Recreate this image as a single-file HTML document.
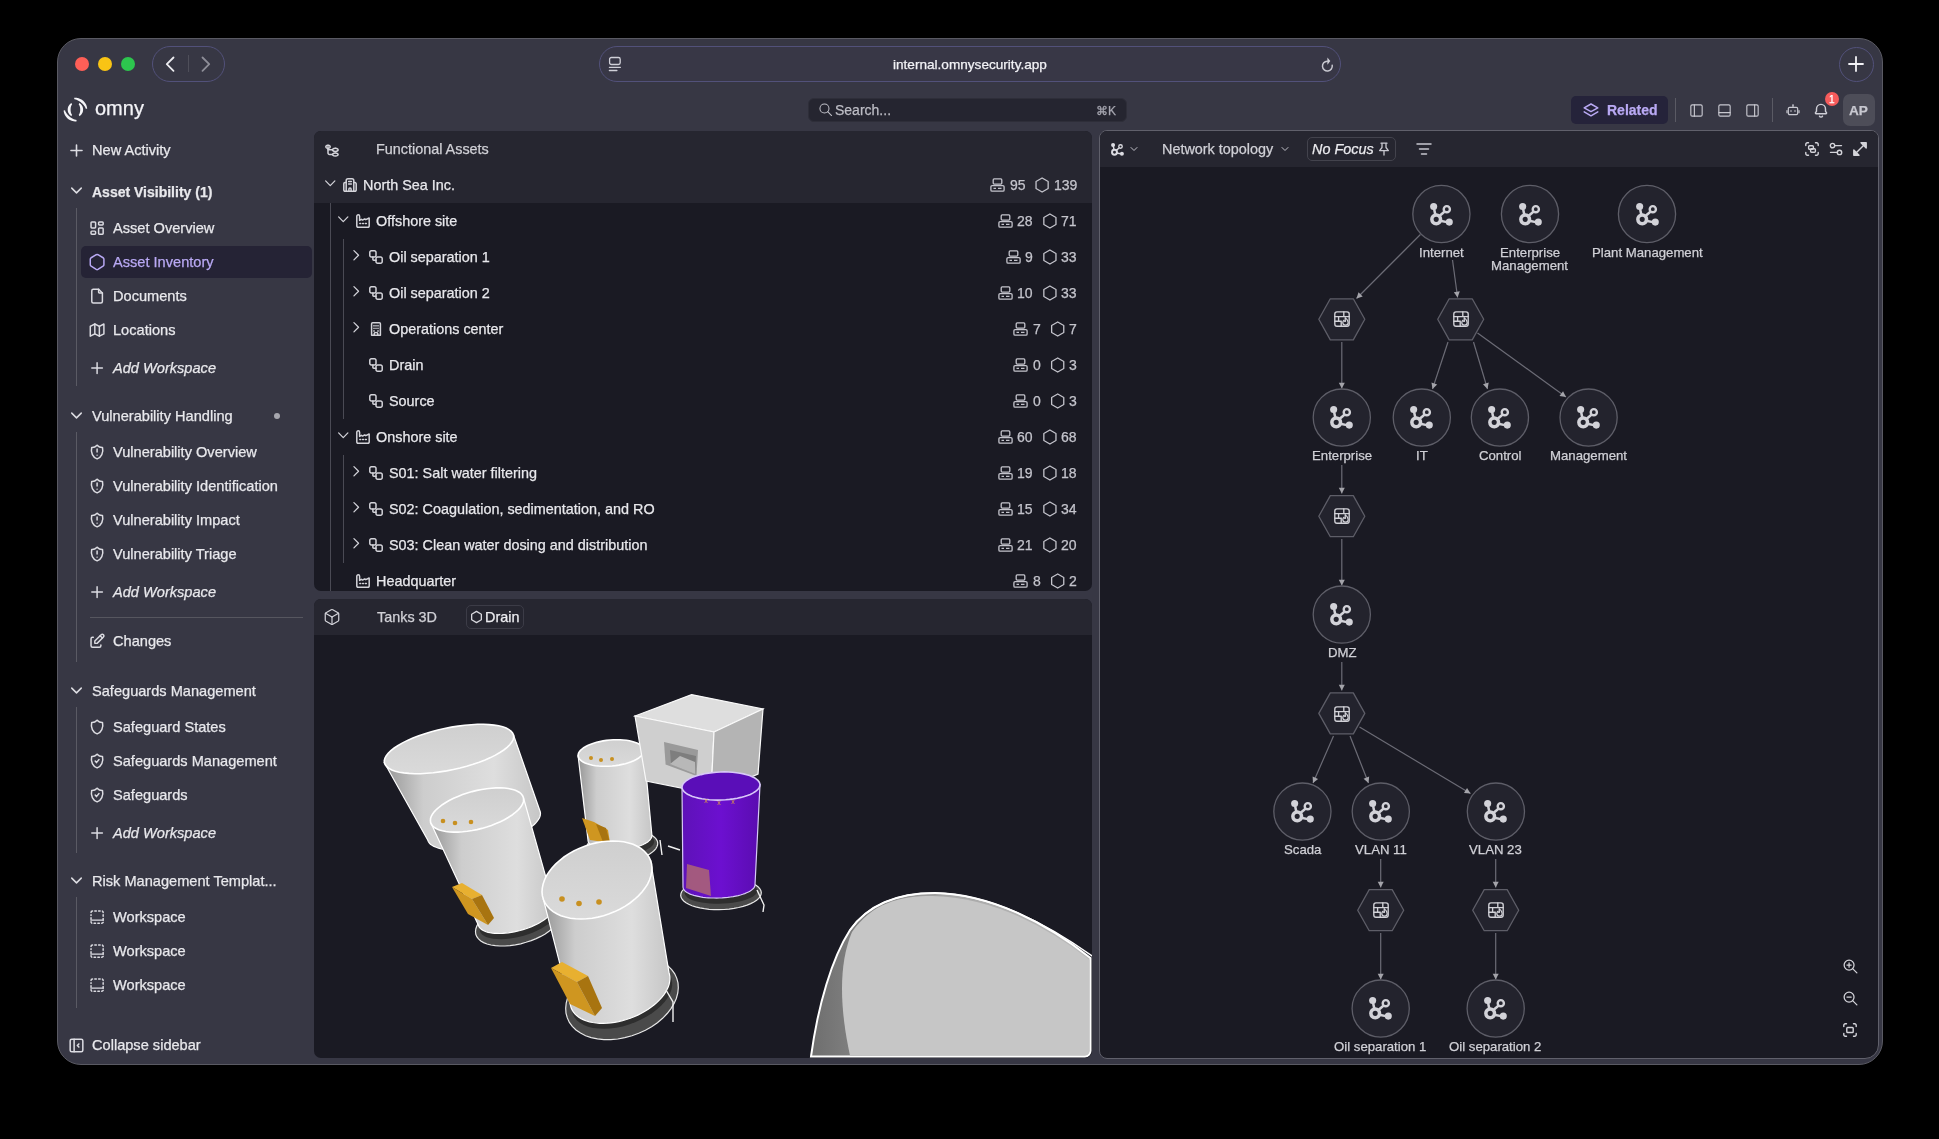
<!DOCTYPE html>
<html><head><meta charset="utf-8">
<style>
*{box-sizing:border-box;margin:0;padding:0}
html,body{width:1939px;height:1139px;background:#000;overflow:hidden;font-family:"Liberation Sans",sans-serif;color:#e6e6ea}
.abs{position:absolute}
.t{position:absolute;white-space:nowrap;line-height:1;will-change:transform;-webkit-text-stroke:0.25px currentColor}
svg{position:absolute;overflow:visible}
</style></head><body>
<div class="abs" style="left:57px;top:38px;width:1826px;height:1027px;background:#373744;border-radius:24px;border:1px solid #5a5a63"></div><div class="abs" style="left:75px;top:57px;width:14px;height:14px;border-radius:50%;background:#fe5f57"></div><div class="abs" style="left:98px;top:57px;width:14px;height:14px;border-radius:50%;background:#f9c414"></div><div class="abs" style="left:121px;top:57px;width:14px;height:14px;border-radius:50%;background:#2dc54e"></div><div class="abs" style="left:152px;top:46px;width:73px;height:36px;border-radius:18px;border:1px solid #52517a"></div><div class="abs" style="left:188px;top:55px;width:1px;height:17px;background:#4f4f5a"></div><svg style="left:0px;top:0px" width="1" height="1" viewBox="None" fill="none" stroke="#d8d8de" stroke-width="2" stroke-linecap="round" stroke-linejoin="round" ><path d="M173.5 57.5 L166.8 64.2 L173.5 70.8" stroke="#ececf0" stroke-width="1.8"/><path d="M202.5 57.5 L209.2 64.2 L202.5 70.8" stroke="#8e8e98" stroke-width="1.8"/></svg><div class="abs" style="left:599px;top:46px;width:742px;height:36px;border-radius:18px;border:1px solid #52517a;background:#383746"></div><div class="t" style="left:893px;top:57.71px;font-size:13.6px;color:#f2f2f6;font-weight:500;font-style:normal;">internal.omnysecurity.app</div><svg style="left:608px;top:56px" width="14" height="16" viewBox="0 0 14 16" fill="none" stroke="#d0d0d8" stroke-width="1.3" stroke-linecap="round"><rect x="1.6" y="1.5" width="10.6" height="7" rx="1.8"/><path d="M1.4 11.3h11M1.4 14.5h7.5"/></svg><svg style="left:1319px;top:55px" width="16" height="16" viewBox="0 0 16 16" fill="none" stroke="#c8c8d0" stroke-width="1.5" stroke-linecap="round"><path d="M13.2 10.25A4.9 4.9 0 1 1 8.2 6.2"/><path d="M8.4 2.4L11.3 6.1L8.4 9.8Z" fill="#d0d0d8" stroke="none"/></svg><div class="abs" style="left:1839px;top:47px;width:35px;height:35px;border-radius:50%;border:1px solid #52517a"></div><svg style="left:0px;top:0px" width="1" height="1" viewBox="" fill="none" stroke="#d8d8de" stroke-width="2" stroke-linecap="round" stroke-linejoin="round" ><path d="M1856 57V71M1849 64H1863" stroke="#f2f2f6" stroke-width="1.8"/></svg><svg style="left:0;top:0" width="1" height="1"><polygon points="71.32,116.13 70.89,115.84 70.48,115.52 70.09,115.18 69.73,114.81 69.39,114.41 69.08,113.99 68.80,113.56 68.54,113.10 68.32,112.63 68.13,112.15 67.98,111.65 67.86,111.15 67.77,110.64 67.72,110.12 67.70,109.60 67.72,109.08 67.77,108.56 67.86,108.05 67.98,107.55 68.13,107.05 68.32,106.57 68.54,106.10 68.80,105.64 69.08,105.21 69.39,104.79 69.73,104.39 70.09,104.02 70.48,103.68 70.89,103.36 71.32,103.07 72.11,104.34 71.85,104.69 71.62,105.06 71.42,105.42 71.25,105.79 71.11,106.16 70.98,106.53 70.89,106.89 70.81,107.25 70.74,107.60 70.69,107.95 70.66,108.29 70.63,108.62 70.61,108.95 70.60,109.28 70.60,109.60 70.60,109.92 70.61,110.25 70.63,110.58 70.66,110.91 70.69,111.25 70.74,111.60 70.81,111.95 70.89,112.31 70.98,112.67 71.11,113.04 71.25,113.41 71.42,113.78 71.62,114.14 71.85,114.51 72.11,114.86" fill="#f4f4f8"/><polygon points="79.48,103.07 79.91,103.36 80.32,103.68 80.71,104.02 81.07,104.39 81.41,104.79 81.72,105.21 82.00,105.64 82.26,106.10 82.48,106.57 82.67,107.05 82.82,107.55 82.94,108.05 83.03,108.56 83.08,109.08 83.10,109.60 83.08,110.12 83.03,110.64 82.94,111.15 82.82,111.65 82.67,112.15 82.48,112.63 82.26,113.10 82.00,113.56 81.72,113.99 81.41,114.41 81.07,114.81 80.71,115.18 80.32,115.52 79.91,115.84 79.48,116.13 78.69,114.86 78.95,114.51 79.18,114.14 79.38,113.78 79.55,113.41 79.69,113.04 79.82,112.67 79.91,112.31 79.99,111.95 80.06,111.60 80.11,111.25 80.14,110.91 80.17,110.58 80.19,110.25 80.20,109.92 80.20,109.60 80.20,109.28 80.19,108.95 80.17,108.62 80.14,108.29 80.11,107.95 80.06,107.60 79.99,107.25 79.91,106.89 79.82,106.53 79.69,106.16 79.55,105.79 79.38,105.42 79.18,105.06 78.95,104.69 78.69,104.34" fill="#f4f4f8"/><polygon points="74.17,97.86 74.80,97.82 75.43,97.80 76.06,97.82 76.69,97.87 77.31,97.96 77.93,98.08 78.55,98.23 79.15,98.41 79.74,98.63 80.32,98.88 80.89,99.16 81.44,99.46 81.98,99.80 82.49,100.17 82.98,100.56 83.46,100.98 83.91,101.42 84.33,101.89 84.73,102.38 85.11,102.89 85.45,103.42 85.77,103.96 86.05,104.53 86.31,105.10 86.53,105.69 86.73,106.29 86.89,106.91 87.02,107.52 87.11,108.15 87.17,108.78 85.77,108.87 85.59,108.34 85.37,107.82 85.13,107.32 84.88,106.83 84.60,106.37 84.31,105.93 84.00,105.50 83.69,105.09 83.36,104.70 83.03,104.32 82.69,103.96 82.34,103.61 81.98,103.27 81.62,102.95 81.25,102.63 80.87,102.32 80.49,102.02 80.09,101.73 79.69,101.45 79.27,101.17 78.84,100.91 78.40,100.66 77.94,100.41 77.47,100.19 76.98,99.98 76.48,99.79 75.96,99.62 75.42,99.47 74.87,99.35 74.31,99.26" fill="#f4f4f8"/><polygon points="76.63,121.34 76.00,121.38 75.37,121.40 74.74,121.38 74.11,121.33 73.49,121.24 72.87,121.12 72.25,120.97 71.65,120.79 71.06,120.57 70.48,120.32 69.91,120.04 69.36,119.74 68.82,119.40 68.31,119.03 67.82,118.64 67.34,118.22 66.89,117.78 66.47,117.31 66.07,116.82 65.69,116.31 65.35,115.78 65.03,115.24 64.75,114.67 64.49,114.10 64.27,113.51 64.07,112.91 63.91,112.29 63.78,111.68 63.69,111.05 63.63,110.42 65.03,110.33 65.21,110.86 65.43,111.38 65.67,111.88 65.92,112.37 66.20,112.83 66.49,113.27 66.80,113.70 67.11,114.11 67.44,114.50 67.77,114.88 68.11,115.24 68.46,115.59 68.82,115.93 69.18,116.25 69.55,116.57 69.93,116.88 70.31,117.18 70.71,117.47 71.11,117.75 71.53,118.03 71.96,118.29 72.40,118.54 72.86,118.79 73.33,119.01 73.82,119.22 74.32,119.41 74.84,119.58 75.38,119.73 75.93,119.85 76.49,119.94" fill="#f4f4f8"/></svg><div class="t" style="left:95px;top:98.39px;font-size:20px;color:#f4f4f8;font-weight:400;font-style:normal;">omny</div><div class="abs" style="left:808px;top:98px;width:319px;height:24px;border-radius:6px;background:#252530;border:1px solid #2e2e39"></div><svg style="left:818.25px;top:102.25px" width="15.5" height="15.5" viewBox="0 0 24 24" fill="none" stroke="#c0c0c8" stroke-width="1.6" stroke-linecap="round" stroke-linejoin="round" ><path d="M10 10m-7 0a7 7 0 1 0 14 0a7 7 0 1 0 -14 0"/><path d="M21 21l-6 -6"/></svg><div class="t" style="left:834.5px;top:103.37px;font-size:14px;color:#bdbdc5;font-weight:400;font-style:normal;">Search...</div><div class="t" style="left:1096px;top:105.03px;font-size:12px;color:#a8a8b2;font-weight:400;font-style:normal;">&#8984;K</div><div class="abs" style="left:1571px;top:96px;width:97px;height:28px;border-radius:5px;background:#25233a"></div><svg style="left:1583px;top:103px" width="16" height="15" viewBox="0 0 16 15" fill="none" stroke="#b9a9f4" stroke-width="1.5" stroke-linecap="round" stroke-linejoin="round"><path d="M8 1L14.8 4.8L8 8.6L1.2 4.8Z"/><path d="M1.2 8.8L8 12.8L14.8 8.8"/></svg><div class="t" style="left:1607px;top:103.37px;font-size:14px;color:#b9a9f4;font-weight:700;font-style:normal;">Related</div><div class="abs" style="left:1675px;top:98px;width:1px;height:24px;background:#5a5a64"></div><div class="abs" style="left:1772px;top:98px;width:1px;height:24px;background:#5a5a64"></div><svg style="left:1687.5px;top:101.5px" width="17" height="17" viewBox="0 0 24 24" fill="none" stroke="#c8c8d0" stroke-width="1.6" stroke-linecap="round" stroke-linejoin="round" ><path d="M4 6a2 2 0 0 1 2 -2h12a2 2 0 0 1 2 2v12a2 2 0 0 1 -2 2h-12a2 2 0 0 1 -2 -2z"/><path d="M9 4v16"/></svg><svg style="left:1715.5px;top:101.5px" width="17" height="17" viewBox="0 0 24 24" fill="none" stroke="#c8c8d0" stroke-width="1.6" stroke-linecap="round" stroke-linejoin="round" ><path d="M4 6a2 2 0 0 1 2 -2h12a2 2 0 0 1 2 2v12a2 2 0 0 1 -2 2h-12a2 2 0 0 1 -2 -2z"/><path d="M4 15h16"/></svg><svg style="left:1743.5px;top:101.5px" width="17" height="17" viewBox="0 0 24 24" fill="none" stroke="#c8c8d0" stroke-width="1.6" stroke-linecap="round" stroke-linejoin="round" ><path d="M4 6a2 2 0 0 1 2 -2h12a2 2 0 0 1 2 2v12a2 2 0 0 1 -2 2h-12a2 2 0 0 1 -2 -2z"/><path d="M15 4v16"/></svg><svg style="left:1785.0px;top:102.0px" width="16" height="16" viewBox="0 0 24 24" fill="none" stroke="#c8c8d0" stroke-width="1.8" stroke-linecap="round" stroke-linejoin="round" ><path d="M5 10a2 2 0 0 1 2 -2h10a2 2 0 0 1 2 2v7a2 2 0 0 1 -2 2h-10a2 2 0 0 1 -2 -2z"/><path d="M12 5v3"/><path d="M3 13v3"/><path d="M21 13v3"/><path d="M9 13v1"/><path d="M15 13v1"/><path d="M12 4v.01"/></svg><svg style="left:1812px;top:101px" width="18" height="18" viewBox="0 0 24 24" fill="none" stroke="#d0d0d8" stroke-width="1.9" stroke-linecap="round" stroke-linejoin="round"><path d="M5.5 17h13a1 1 0 0 0 .75 -1.65L18 13.8V10.5a6 6 0 0 0 -12 0v3.3l-1.25 1.55A1 1 0 0 0 5.5 17z"/><path d="M10 20.2a2.2 2.2 0 0 0 4 0"/></svg><div class="abs" style="left:1825px;top:92px;width:14px;height:14px;border-radius:50%;background:#f65b5b"></div><div class="t" style="left:1829.2px;top:95.20px;font-size:10px;color:#ffffff;font-weight:400;font-style:normal;">1</div><div class="abs" style="left:1843px;top:94px;width:32px;height:32px;border-radius:7px;background:#4d4d58"></div><div class="t" style="left:1849px;top:103.71px;font-size:13.6px;color:#c8c8d0;font-weight:700;font-style:normal;">AP</div><svg style="left:66.5px;top:140.5px" width="19" height="19" viewBox="0 0 24 24" fill="none" stroke="#dcdce2" stroke-width="2.0" stroke-linecap="round" stroke-linejoin="round" ><path d="M12 5v14"/><path d="M5 12h14"/></svg><div class="t" style="left:92px;top:142.87px;font-size:14.6px;color:#e8e8ec;font-weight:400;font-style:normal;">New Activity</div><svg style="left:66.5px;top:180.5px" width="19" height="19" viewBox="0 0 24 24" fill="none" stroke="#dcdce2" stroke-width="1.9" stroke-linecap="round" stroke-linejoin="round" ><path d="M6 9l6 6l6 -6"/></svg><div class="t" style="left:92px;top:185.37px;font-size:14px;color:#e8e8ec;font-weight:700;font-style:normal;">Asset Visibility (1)</div><div class="abs" style="left:76px;top:208px;width:1px;height:178px;background:#5a5a64"></div><svg style="left:87.9px;top:218.9px" width="18.2" height="18.2" viewBox="0 0 24 24" fill="none" stroke="#dcdce2" stroke-width="1.95" stroke-linecap="round" stroke-linejoin="round" ><path d="M5 4h4a1 1 0 0 1 1 1v6a1 1 0 0 1 -1 1h-4a1 1 0 0 1 -1 -1v-6a1 1 0 0 1 1 -1"/><path d="M5 16h4a1 1 0 0 1 1 1v2a1 1 0 0 1 -1 1h-4a1 1 0 0 1 -1 -1v-2a1 1 0 0 1 1 -1"/><path d="M15 12h4a1 1 0 0 1 1 1v6a1 1 0 0 1 -1 1h-4a1 1 0 0 1 -1 -1v-6a1 1 0 0 1 1 -1"/><path d="M15 4h4a1 1 0 0 1 1 1v2a1 1 0 0 1 -1 1h-4a1 1 0 0 1 -1 -1v-2a1 1 0 0 1 1 -1"/></svg><div class="t" style="left:113px;top:220.87px;font-size:14.6px;color:#e8e8ec;font-weight:400;font-style:normal;">Asset Overview</div><div class="abs" style="left:81px;top:246px;width:231px;height:32px;border-radius:5px;background:#252335"></div><svg style="left:87.9px;top:252.9px" width="18.2" height="18.2" viewBox="0 0 24 24" fill="none" stroke="#b9a9f4" stroke-width="1.95" stroke-linecap="round" stroke-linejoin="round" ><path d="M19.875 6.27c.7 .398 1.13 1.143 1.125 1.948v7.284c0 .809 -.443 1.555 -1.158 1.948l-6.75 4.27a2.269 2.269 0 0 1 -2.184 0l-6.75 -4.27a2.225 2.225 0 0 1 -1.158 -1.948v-7.285c0 -.809 .443 -1.554 1.158 -1.947l6.75 -3.98a2.33 2.33 0 0 1 2.25 0l6.75 3.98h-.033z"/></svg><div class="t" style="left:113px;top:254.87px;font-size:14.6px;color:#b9a9f4;font-weight:400;font-style:normal;">Asset Inventory</div><svg style="left:87.9px;top:286.9px" width="18.2" height="18.2" viewBox="0 0 24 24" fill="none" stroke="#dcdce2" stroke-width="1.95" stroke-linecap="round" stroke-linejoin="round" ><path d="M14 3v4a1 1 0 0 0 1 1h4"/><path d="M17 21h-10a2 2 0 0 1 -2 -2v-14a2 2 0 0 1 2 -2h7l5 5v11a2 2 0 0 1 -2 2z"/></svg><div class="t" style="left:113px;top:288.87px;font-size:14.6px;color:#e8e8ec;font-weight:400;font-style:normal;">Documents</div><svg style="left:87.9px;top:320.9px" width="18.2" height="18.2" viewBox="0 0 24 24" fill="none" stroke="#dcdce2" stroke-width="1.95" stroke-linecap="round" stroke-linejoin="round" ><path d="M3 7l6 -3l6 3l6 -3v13l-6 3l-6 -3l-6 3v-13"/><path d="M9 4v13"/><path d="M15 7v13"/></svg><div class="t" style="left:113px;top:322.87px;font-size:14.6px;color:#e8e8ec;font-weight:400;font-style:normal;">Locations</div><svg style="left:87.9px;top:358.9px" width="18.2" height="18.2" viewBox="0 0 24 24" fill="none" stroke="#dcdce2" stroke-width="1.95" stroke-linecap="round" stroke-linejoin="round" ><path d="M12 5v14"/><path d="M5 12h14"/></svg><div class="t" style="left:113px;top:360.87px;font-size:14.6px;color:#e8e8ec;font-weight:400;font-style:italic;">Add Workspace</div><svg style="left:66.5px;top:405.5px" width="19" height="19" viewBox="0 0 24 24" fill="none" stroke="#dcdce2" stroke-width="1.9" stroke-linecap="round" stroke-linejoin="round" ><path d="M6 9l6 6l6 -6"/></svg><div class="t" style="left:92px;top:408.87px;font-size:14.6px;color:#e8e8ec;font-weight:400;font-style:normal;">Vulnerability Handling</div><div class="abs" style="left:274px;top:413px;width:6px;height:6px;border-radius:50%;background:#a6a6ae"></div><div class="abs" style="left:76px;top:432px;width:1px;height:230px;background:#5a5a64"></div><svg style="left:87.9px;top:442.9px" width="18.2" height="18.2" viewBox="0 0 24 24" fill="none" stroke="#dcdce2" stroke-width="1.4787499999999998" stroke-linecap="round" stroke-linejoin="round" ><g transform="translate(12,0) scale(0.84,1) translate(-12,0)"><path d="M12 3a12 12 0 0 0 8.5 3a12 12 0 0 1 -8.5 15a12 12 0 0 1 -8.5 -15a12 12 0 0 0 8.5 -3" vector-effect="non-scaling-stroke"/><path d="M12 8v4" vector-effect="non-scaling-stroke"/><path d="M12 16v.01" vector-effect="non-scaling-stroke"/></g></svg><div class="t" style="left:113px;top:444.87px;font-size:14.6px;color:#e8e8ec;font-weight:400;font-style:normal;">Vulnerability Overview</div><svg style="left:87.9px;top:476.9px" width="18.2" height="18.2" viewBox="0 0 24 24" fill="none" stroke="#dcdce2" stroke-width="1.4787499999999998" stroke-linecap="round" stroke-linejoin="round" ><g transform="translate(12,0) scale(0.84,1) translate(-12,0)"><path d="M12 3a12 12 0 0 0 8.5 3a12 12 0 0 1 -8.5 15a12 12 0 0 1 -8.5 -15a12 12 0 0 0 8.5 -3" vector-effect="non-scaling-stroke"/><path d="M12 8v4" vector-effect="non-scaling-stroke"/><path d="M12 16v.01" vector-effect="non-scaling-stroke"/></g></svg><div class="t" style="left:113px;top:478.87px;font-size:14.6px;color:#e8e8ec;font-weight:400;font-style:normal;">Vulnerability Identification</div><svg style="left:87.9px;top:510.9px" width="18.2" height="18.2" viewBox="0 0 24 24" fill="none" stroke="#dcdce2" stroke-width="1.4787499999999998" stroke-linecap="round" stroke-linejoin="round" ><g transform="translate(12,0) scale(0.84,1) translate(-12,0)"><path d="M12 3a12 12 0 0 0 8.5 3a12 12 0 0 1 -8.5 15a12 12 0 0 1 -8.5 -15a12 12 0 0 0 8.5 -3" vector-effect="non-scaling-stroke"/><path d="M12 8v4" vector-effect="non-scaling-stroke"/><path d="M12 16v.01" vector-effect="non-scaling-stroke"/></g></svg><div class="t" style="left:113px;top:512.87px;font-size:14.6px;color:#e8e8ec;font-weight:400;font-style:normal;">Vulnerability Impact</div><svg style="left:87.9px;top:544.9px" width="18.2" height="18.2" viewBox="0 0 24 24" fill="none" stroke="#dcdce2" stroke-width="1.4787499999999998" stroke-linecap="round" stroke-linejoin="round" ><g transform="translate(12,0) scale(0.84,1) translate(-12,0)"><path d="M12 3a12 12 0 0 0 8.5 3a12 12 0 0 1 -8.5 15a12 12 0 0 1 -8.5 -15a12 12 0 0 0 8.5 -3" vector-effect="non-scaling-stroke"/><path d="M12 8v4" vector-effect="non-scaling-stroke"/><path d="M12 16v.01" vector-effect="non-scaling-stroke"/></g></svg><div class="t" style="left:113px;top:546.87px;font-size:14.6px;color:#e8e8ec;font-weight:400;font-style:normal;">Vulnerability Triage</div><svg style="left:87.9px;top:582.9px" width="18.2" height="18.2" viewBox="0 0 24 24" fill="none" stroke="#dcdce2" stroke-width="1.95" stroke-linecap="round" stroke-linejoin="round" ><path d="M12 5v14"/><path d="M5 12h14"/></svg><div class="t" style="left:113px;top:584.87px;font-size:14.6px;color:#e8e8ec;font-weight:400;font-style:italic;">Add Workspace</div><div class="abs" style="left:90px;top:617px;width:213px;height:1px;background:#56565f"></div><svg style="left:87.9px;top:631.9px" width="18.2" height="18.2" viewBox="0 0 24 24" fill="none" stroke="#dcdce2" stroke-width="1.95" stroke-linecap="round" stroke-linejoin="round" ><path d="M7 7h-1a2 2 0 0 0 -2 2v9a2 2 0 0 0 2 2h9a2 2 0 0 0 2 -2v-1"/><path d="M20.385 6.585a2.1 2.1 0 0 0 -2.97 -2.97l-8.415 8.385v3h3l8.385 -8.415z"/><path d="M16 5l3 3"/></svg><div class="t" style="left:113px;top:633.87px;font-size:14.6px;color:#e8e8ec;font-weight:400;font-style:normal;">Changes</div><svg style="left:66.5px;top:680.5px" width="19" height="19" viewBox="0 0 24 24" fill="none" stroke="#dcdce2" stroke-width="1.9" stroke-linecap="round" stroke-linejoin="round" ><path d="M6 9l6 6l6 -6"/></svg><div class="t" style="left:92px;top:683.87px;font-size:14.6px;color:#e8e8ec;font-weight:400;font-style:normal;">Safeguards Management</div><div class="abs" style="left:76px;top:707px;width:1px;height:146px;background:#5a5a64"></div><svg style="left:87.9px;top:717.9px" width="18.2" height="18.2" viewBox="0 0 24 24" fill="none" stroke="#dcdce2" stroke-width="1.4787499999999998" stroke-linecap="round" stroke-linejoin="round" ><g transform="translate(12,0) scale(0.84,1) translate(-12,0)"><path d="M12 3a12 12 0 0 0 8.5 3a12 12 0 0 1 -8.5 15a12 12 0 0 1 -8.5 -15a12 12 0 0 0 8.5 -3" vector-effect="non-scaling-stroke"/></g></svg><div class="t" style="left:113px;top:719.87px;font-size:14.6px;color:#e8e8ec;font-weight:400;font-style:normal;">Safeguard States</div><svg style="left:87.9px;top:751.9px" width="18.2" height="18.2" viewBox="0 0 24 24" fill="none" stroke="#dcdce2" stroke-width="1.4787499999999998" stroke-linecap="round" stroke-linejoin="round" ><g transform="translate(12,0) scale(0.84,1) translate(-12,0)"><path d="M12 3a12 12 0 0 0 8.5 3a12 12 0 0 1 -8.5 15a12 12 0 0 1 -8.5 -15a12 12 0 0 0 8.5 -3" vector-effect="non-scaling-stroke"/><path d="M9 12l2 2l4 -4" vector-effect="non-scaling-stroke"/></g></svg><div class="t" style="left:113px;top:753.87px;font-size:14.6px;color:#e8e8ec;font-weight:400;font-style:normal;">Safeguards Management</div><svg style="left:87.9px;top:785.9px" width="18.2" height="18.2" viewBox="0 0 24 24" fill="none" stroke="#dcdce2" stroke-width="1.4787499999999998" stroke-linecap="round" stroke-linejoin="round" ><g transform="translate(12,0) scale(0.84,1) translate(-12,0)"><path d="M12 3a12 12 0 0 0 8.5 3a12 12 0 0 1 -8.5 15a12 12 0 0 1 -8.5 -15a12 12 0 0 0 8.5 -3" vector-effect="non-scaling-stroke"/><path d="M9 12l2 2l4 -4" vector-effect="non-scaling-stroke"/></g></svg><div class="t" style="left:113px;top:787.87px;font-size:14.6px;color:#e8e8ec;font-weight:400;font-style:normal;">Safeguards</div><svg style="left:87.9px;top:823.9px" width="18.2" height="18.2" viewBox="0 0 24 24" fill="none" stroke="#dcdce2" stroke-width="1.95" stroke-linecap="round" stroke-linejoin="round" ><path d="M12 5v14"/><path d="M5 12h14"/></svg><div class="t" style="left:113px;top:825.87px;font-size:14.6px;color:#e8e8ec;font-weight:400;font-style:italic;">Add Workspace</div><svg style="left:66.5px;top:870.5px" width="19" height="19" viewBox="0 0 24 24" fill="none" stroke="#dcdce2" stroke-width="1.9" stroke-linecap="round" stroke-linejoin="round" ><path d="M6 9l6 6l6 -6"/></svg><div class="t" style="left:92px;top:873.87px;font-size:14.6px;color:#e8e8ec;font-weight:400;font-style:normal;">Risk Management Templat...</div><div class="abs" style="left:76px;top:897px;width:1px;height:111px;background:#5a5a64"></div><svg style="left:87.9px;top:907.9px" width="18.2" height="18.2" viewBox="0 0 24 24" fill="none" stroke="#dcdce2" stroke-width="1.95" stroke-linecap="round" stroke-linejoin="round" ><path d="M4 6v-0a2 2 0 0 1 2 -2"/><path d="M9 4h2"/><path d="M14 4h2"/><path d="M19 4a2 2 0 0 1 1 2"/><path d="M20 9v2"/><path d="M20 14v2"/><path d="M20 19a2 2 0 0 1 -2 1"/><path d="M15 20h-2"/><path d="M10 20h-2"/><path d="M5 20a2 2 0 0 1 -1 -2"/><path d="M4 15v-2"/><path d="M4 10v-1"/><path d="M4 16h16"/></svg><div class="t" style="left:113px;top:909.87px;font-size:14.6px;color:#e8e8ec;font-weight:400;font-style:normal;">Workspace</div><svg style="left:87.9px;top:941.9px" width="18.2" height="18.2" viewBox="0 0 24 24" fill="none" stroke="#dcdce2" stroke-width="1.95" stroke-linecap="round" stroke-linejoin="round" ><path d="M4 6v-0a2 2 0 0 1 2 -2"/><path d="M9 4h2"/><path d="M14 4h2"/><path d="M19 4a2 2 0 0 1 1 2"/><path d="M20 9v2"/><path d="M20 14v2"/><path d="M20 19a2 2 0 0 1 -2 1"/><path d="M15 20h-2"/><path d="M10 20h-2"/><path d="M5 20a2 2 0 0 1 -1 -2"/><path d="M4 15v-2"/><path d="M4 10v-1"/><path d="M4 16h16"/></svg><div class="t" style="left:113px;top:943.87px;font-size:14.6px;color:#e8e8ec;font-weight:400;font-style:normal;">Workspace</div><svg style="left:87.9px;top:975.9px" width="18.2" height="18.2" viewBox="0 0 24 24" fill="none" stroke="#dcdce2" stroke-width="1.95" stroke-linecap="round" stroke-linejoin="round" ><path d="M4 6v-0a2 2 0 0 1 2 -2"/><path d="M9 4h2"/><path d="M14 4h2"/><path d="M19 4a2 2 0 0 1 1 2"/><path d="M20 9v2"/><path d="M20 14v2"/><path d="M20 19a2 2 0 0 1 -2 1"/><path d="M15 20h-2"/><path d="M10 20h-2"/><path d="M5 20a2 2 0 0 1 -1 -2"/><path d="M4 15v-2"/><path d="M4 10v-1"/><path d="M4 16h16"/></svg><div class="t" style="left:113px;top:977.87px;font-size:14.6px;color:#e8e8ec;font-weight:400;font-style:normal;">Workspace</div><svg style="left:66.5px;top:1035.5px" width="19" height="19" viewBox="0 0 24 24" fill="none" stroke="#dcdce2" stroke-width="1.9" stroke-linecap="round" stroke-linejoin="round" ><path d="M4 6a2 2 0 0 1 2 -2h12a2 2 0 0 1 2 2v12a2 2 0 0 1 -2 2h-12a2 2 0 0 1 -2 -2z"/><path d="M9 4v16"/><path d="M15 10l-2 2l2 2"/></svg><div class="t" style="left:92px;top:1037.87px;font-size:14.6px;color:#e8e8ec;font-weight:400;font-style:normal;">Collapse sidebar</div><div class="abs" style="left:314px;top:131px;width:778px;height:460px;border-radius:7px;background:#1a1a23;overflow:hidden"><div class="abs" style="left:0;top:0;width:778px;height:72px;background:#262630"></div></div><svg style="left:325px;top:142px" width="14" height="14" viewBox="0 0 14 14" fill="none" stroke="#d4d4da" stroke-width="1.5" stroke-linecap="round" stroke-linejoin="round"><path d="M3 3.2a2.2 1.6 0 1 0 0.01 0"/><path d="M3 4.8V11a1.5 1.5 0 0 0 1.5 1.5H7.5"/><path d="M3 7.8H7.5"/><path d="M10.3 6.2a2.8 1.6 0 1 0 0.01 0"/><path d="M10.3 10.9a2.8 1.6 0 1 0 0.01 0"/></svg><div class="t" style="left:376px;top:142.04px;font-size:14.4px;color:#d0d0d6;font-weight:400;font-style:normal;">Functional Assets</div><svg style="left:320.75px;top:173.75px" width="18.5" height="18.5" viewBox="0 0 24 24" fill="none" stroke="#d4d4da" stroke-width="1.6" stroke-linecap="round" stroke-linejoin="round" ><path d="M6 9l6 6l6 -6"/></svg><svg style="left:343px;top:178px" width="14" height="14" viewBox="0 0 14 14" fill="none" stroke="#d4d4da" stroke-width="1.5" stroke-linecap="round" stroke-linejoin="round"><path d="M3.2 13.2V2.6a1.8 1.8 0 0 1 1.8 -1.8h4a1.8 1.8 0 0 1 1.8 1.8V13.2"/><path d="M3.2 4.6H2a1.2 1.2 0 0 0 -1.2 1.2V12a1.2 1.2 0 0 0 1.2 1.2H12a1.2 1.2 0 0 0 1.2 -1.2V5.8a1.2 1.2 0 0 0 -1.2 -1.2H10.8"/><path d="M5.6 3.6H8.4"/><path d="M5.6 6.1H8.4"/><path d="M5.9 13.2V11a1.1 1.1 0 0 1 2.2 0V13.2"/></svg><div class="t" style="left:363px;top:178.04px;font-size:14.4px;color:#e8e8ec;font-weight:400;font-style:normal;">North Sea Inc.</div><div class="t" style="left:1053.6px;top:178.37px;font-size:14px;color:#c4c4cc;font-weight:400;font-style:normal;">139</div><svg style="left:0;top:0" width="1" height="1"><polygon points="1042.10,178.00 1048.16,181.50 1048.16,188.50 1042.10,192.00 1036.04,188.50 1036.04,181.50" fill="none" stroke="#c4c4cc" stroke-width="1.3" stroke-linejoin="round"/></svg><div class="t" style="left:1009.4999999999999px;top:178.37px;font-size:14px;color:#c4c4cc;font-weight:400;font-style:normal;">95</div><svg style="left:989.9999999999999px;top:178px" width="15" height="14" viewBox="0 0 15 14" fill="none" stroke="#c4c4cc" stroke-width="1.3"><rect x="3.2" y="0.9" width="8.6" height="5.2" rx="1"/><rect x="0.9" y="7.6" width="13.2" height="5.5" rx="1.2"/><path d="M3.5 10.35h2.5M8 10.35h3.5" stroke-width="1.4"/></svg><div class="abs" style="left:330px;top:203px;width:1px;height:388px;background:#4a4a54"></div><svg style="left:333.75px;top:209.75px" width="18.5" height="18.5" viewBox="0 0 24 24" fill="none" stroke="#d4d4da" stroke-width="1.6" stroke-linecap="round" stroke-linejoin="round" ><path d="M6 9l6 6l6 -6"/></svg><svg style="left:356px;top:214px" width="14" height="14" viewBox="0 0 14 14" fill="none" stroke="#d4d4da" stroke-width="1.5" stroke-linecap="round" stroke-linejoin="round"><path d="M0.8 12V2.2a1.4 1.4 0 0 1 2.8 0V6.4L5.4 5.3L6.6 6.1L8.6 4.9L9.8 5.7L13.2 4V12a1.2 1.2 0 0 1 -1.2 1.2H2a1.2 1.2 0 0 1 -1.2 -1.2z"/><path d="M3.8 9.6h.9"/><path d="M6.6 9.6h.9"/><path d="M9.4 9.6h.9"/></svg><div class="t" style="left:376px;top:214.04px;font-size:14.4px;color:#e8e8ec;font-weight:400;font-style:normal;">Offshore site</div><div class="t" style="left:1061.4px;top:214.37px;font-size:14px;color:#c4c4cc;font-weight:400;font-style:normal;">71</div><svg style="left:0;top:0" width="1" height="1"><polygon points="1049.90,214.00 1055.96,217.50 1055.96,224.50 1049.90,228.00 1043.84,224.50 1043.84,217.50" fill="none" stroke="#c4c4cc" stroke-width="1.3" stroke-linejoin="round"/></svg><div class="t" style="left:1017.3000000000001px;top:214.37px;font-size:14px;color:#c4c4cc;font-weight:400;font-style:normal;">28</div><svg style="left:997.8000000000001px;top:214px" width="15" height="14" viewBox="0 0 15 14" fill="none" stroke="#c4c4cc" stroke-width="1.3"><rect x="3.2" y="0.9" width="8.6" height="5.2" rx="1"/><rect x="0.9" y="7.6" width="13.2" height="5.5" rx="1.2"/><path d="M3.5 10.35h2.5M8 10.35h3.5" stroke-width="1.4"/></svg><div class="abs" style="left:343px;top:239px;width:1px;height:180px;background:#4a4a54"></div><svg style="left:347.25px;top:246.25px" width="18.5" height="18.5" viewBox="0 0 24 24" fill="none" stroke="#d4d4da" stroke-width="1.6" stroke-linecap="round" stroke-linejoin="round" ><path d="M9 6l6 6l-6 6"/></svg><svg style="left:369px;top:250px" width="14" height="14" viewBox="0 0 14 14" fill="none" stroke="#d4d4da" stroke-width="1.5" stroke-linecap="round" stroke-linejoin="round"><path d="M2.3 0.8h3.2a1.5 1.5 0 0 1 1.5 1.5v3.2a1.5 1.5 0 0 1 -1.5 1.5h-3.2a1.5 1.5 0 0 1 -1.5 -1.5v-3.2a1.5 1.5 0 0 1 1.5 -1.5z"/><path d="M8.5 7h3.2a1.5 1.5 0 0 1 1.5 1.5v3.2a1.5 1.5 0 0 1 -1.5 1.5h-3.2a1.5 1.5 0 0 1 -1.5 -1.5v-3.2a1.5 1.5 0 0 1 1.5 -1.5z"/><path d="M3.9 7v2.4a0.8 0.8 0 0 0 0.8 0.8H7"/></svg><div class="t" style="left:389px;top:250.04px;font-size:14.4px;color:#e8e8ec;font-weight:400;font-style:normal;">Oil separation 1</div><div class="t" style="left:1061.4px;top:250.37px;font-size:14px;color:#c4c4cc;font-weight:400;font-style:normal;">33</div><svg style="left:0;top:0" width="1" height="1"><polygon points="1049.90,250.00 1055.96,253.50 1055.96,260.50 1049.90,264.00 1043.84,260.50 1043.84,253.50" fill="none" stroke="#c4c4cc" stroke-width="1.3" stroke-linejoin="round"/></svg><div class="t" style="left:1025.1000000000001px;top:250.37px;font-size:14px;color:#c4c4cc;font-weight:400;font-style:normal;">9</div><svg style="left:1005.6000000000001px;top:250px" width="15" height="14" viewBox="0 0 15 14" fill="none" stroke="#c4c4cc" stroke-width="1.3"><rect x="3.2" y="0.9" width="8.6" height="5.2" rx="1"/><rect x="0.9" y="7.6" width="13.2" height="5.5" rx="1.2"/><path d="M3.5 10.35h2.5M8 10.35h3.5" stroke-width="1.4"/></svg><svg style="left:347.25px;top:282.25px" width="18.5" height="18.5" viewBox="0 0 24 24" fill="none" stroke="#d4d4da" stroke-width="1.6" stroke-linecap="round" stroke-linejoin="round" ><path d="M9 6l6 6l-6 6"/></svg><svg style="left:369px;top:286px" width="14" height="14" viewBox="0 0 14 14" fill="none" stroke="#d4d4da" stroke-width="1.5" stroke-linecap="round" stroke-linejoin="round"><path d="M2.3 0.8h3.2a1.5 1.5 0 0 1 1.5 1.5v3.2a1.5 1.5 0 0 1 -1.5 1.5h-3.2a1.5 1.5 0 0 1 -1.5 -1.5v-3.2a1.5 1.5 0 0 1 1.5 -1.5z"/><path d="M8.5 7h3.2a1.5 1.5 0 0 1 1.5 1.5v3.2a1.5 1.5 0 0 1 -1.5 1.5h-3.2a1.5 1.5 0 0 1 -1.5 -1.5v-3.2a1.5 1.5 0 0 1 1.5 -1.5z"/><path d="M3.9 7v2.4a0.8 0.8 0 0 0 0.8 0.8H7"/></svg><div class="t" style="left:389px;top:286.04px;font-size:14.4px;color:#e8e8ec;font-weight:400;font-style:normal;">Oil separation 2</div><div class="t" style="left:1061.4px;top:286.37px;font-size:14px;color:#c4c4cc;font-weight:400;font-style:normal;">33</div><svg style="left:0;top:0" width="1" height="1"><polygon points="1049.90,286.00 1055.96,289.50 1055.96,296.50 1049.90,300.00 1043.84,296.50 1043.84,289.50" fill="none" stroke="#c4c4cc" stroke-width="1.3" stroke-linejoin="round"/></svg><div class="t" style="left:1017.3000000000001px;top:286.37px;font-size:14px;color:#c4c4cc;font-weight:400;font-style:normal;">10</div><svg style="left:997.8000000000001px;top:286px" width="15" height="14" viewBox="0 0 15 14" fill="none" stroke="#c4c4cc" stroke-width="1.3"><rect x="3.2" y="0.9" width="8.6" height="5.2" rx="1"/><rect x="0.9" y="7.6" width="13.2" height="5.5" rx="1.2"/><path d="M3.5 10.35h2.5M8 10.35h3.5" stroke-width="1.4"/></svg><svg style="left:347.25px;top:318.25px" width="18.5" height="18.5" viewBox="0 0 24 24" fill="none" stroke="#d4d4da" stroke-width="1.6" stroke-linecap="round" stroke-linejoin="round" ><path d="M9 6l6 6l-6 6"/></svg><svg style="left:369px;top:322px" width="14" height="14" viewBox="0 0 14 14" fill="none" stroke="#d4d4da" stroke-width="1.5" stroke-linecap="round" stroke-linejoin="round"><path d="M2.6 13.2V1.8a1 1 0 0 1 1 -1h6.8a1 1 0 0 1 1 1V13.2z"/><path d="M5 3.6v.4"/><path d="M7 3.6v.4"/><path d="M9 3.6v.4"/><path d="M5 6.2v.4"/><path d="M7 6.2v.4"/><path d="M9 6.2v.4"/><path d="M5 8.8v.4"/><path d="M9 8.8v.4"/><path d="M5.2 13.2v-1.6a1.8 1.2 0 0 1 3.6 0v1.6"/></svg><div class="t" style="left:389px;top:322.04px;font-size:14.4px;color:#e8e8ec;font-weight:400;font-style:normal;">Operations center</div><div class="t" style="left:1069.2px;top:322.37px;font-size:14px;color:#c4c4cc;font-weight:400;font-style:normal;">7</div><svg style="left:0;top:0" width="1" height="1"><polygon points="1057.70,322.00 1063.76,325.50 1063.76,332.50 1057.70,336.00 1051.64,332.50 1051.64,325.50" fill="none" stroke="#c4c4cc" stroke-width="1.3" stroke-linejoin="round"/></svg><div class="t" style="left:1032.9px;top:322.37px;font-size:14px;color:#c4c4cc;font-weight:400;font-style:normal;">7</div><svg style="left:1013.4000000000001px;top:322px" width="15" height="14" viewBox="0 0 15 14" fill="none" stroke="#c4c4cc" stroke-width="1.3"><rect x="3.2" y="0.9" width="8.6" height="5.2" rx="1"/><rect x="0.9" y="7.6" width="13.2" height="5.5" rx="1.2"/><path d="M3.5 10.35h2.5M8 10.35h3.5" stroke-width="1.4"/></svg><svg style="left:369px;top:358px" width="14" height="14" viewBox="0 0 14 14" fill="none" stroke="#d4d4da" stroke-width="1.5" stroke-linecap="round" stroke-linejoin="round"><path d="M2.3 0.8h3.2a1.5 1.5 0 0 1 1.5 1.5v3.2a1.5 1.5 0 0 1 -1.5 1.5h-3.2a1.5 1.5 0 0 1 -1.5 -1.5v-3.2a1.5 1.5 0 0 1 1.5 -1.5z"/><path d="M8.5 7h3.2a1.5 1.5 0 0 1 1.5 1.5v3.2a1.5 1.5 0 0 1 -1.5 1.5h-3.2a1.5 1.5 0 0 1 -1.5 -1.5v-3.2a1.5 1.5 0 0 1 1.5 -1.5z"/><path d="M3.9 7v2.4a0.8 0.8 0 0 0 0.8 0.8H7"/></svg><div class="t" style="left:389px;top:358.04px;font-size:14.4px;color:#e8e8ec;font-weight:400;font-style:normal;">Drain</div><div class="t" style="left:1069.2px;top:358.37px;font-size:14px;color:#c4c4cc;font-weight:400;font-style:normal;">3</div><svg style="left:0;top:0" width="1" height="1"><polygon points="1057.70,358.00 1063.76,361.50 1063.76,368.50 1057.70,372.00 1051.64,368.50 1051.64,361.50" fill="none" stroke="#c4c4cc" stroke-width="1.3" stroke-linejoin="round"/></svg><div class="t" style="left:1032.9px;top:358.37px;font-size:14px;color:#c4c4cc;font-weight:400;font-style:normal;">0</div><svg style="left:1013.4000000000001px;top:358px" width="15" height="14" viewBox="0 0 15 14" fill="none" stroke="#c4c4cc" stroke-width="1.3"><rect x="3.2" y="0.9" width="8.6" height="5.2" rx="1"/><rect x="0.9" y="7.6" width="13.2" height="5.5" rx="1.2"/><path d="M3.5 10.35h2.5M8 10.35h3.5" stroke-width="1.4"/></svg><svg style="left:369px;top:394px" width="14" height="14" viewBox="0 0 14 14" fill="none" stroke="#d4d4da" stroke-width="1.5" stroke-linecap="round" stroke-linejoin="round"><path d="M2.3 0.8h3.2a1.5 1.5 0 0 1 1.5 1.5v3.2a1.5 1.5 0 0 1 -1.5 1.5h-3.2a1.5 1.5 0 0 1 -1.5 -1.5v-3.2a1.5 1.5 0 0 1 1.5 -1.5z"/><path d="M8.5 7h3.2a1.5 1.5 0 0 1 1.5 1.5v3.2a1.5 1.5 0 0 1 -1.5 1.5h-3.2a1.5 1.5 0 0 1 -1.5 -1.5v-3.2a1.5 1.5 0 0 1 1.5 -1.5z"/><path d="M3.9 7v2.4a0.8 0.8 0 0 0 0.8 0.8H7"/></svg><div class="t" style="left:389px;top:394.04px;font-size:14.4px;color:#e8e8ec;font-weight:400;font-style:normal;">Source</div><div class="t" style="left:1069.2px;top:394.37px;font-size:14px;color:#c4c4cc;font-weight:400;font-style:normal;">3</div><svg style="left:0;top:0" width="1" height="1"><polygon points="1057.70,394.00 1063.76,397.50 1063.76,404.50 1057.70,408.00 1051.64,404.50 1051.64,397.50" fill="none" stroke="#c4c4cc" stroke-width="1.3" stroke-linejoin="round"/></svg><div class="t" style="left:1032.9px;top:394.37px;font-size:14px;color:#c4c4cc;font-weight:400;font-style:normal;">0</div><svg style="left:1013.4000000000001px;top:394px" width="15" height="14" viewBox="0 0 15 14" fill="none" stroke="#c4c4cc" stroke-width="1.3"><rect x="3.2" y="0.9" width="8.6" height="5.2" rx="1"/><rect x="0.9" y="7.6" width="13.2" height="5.5" rx="1.2"/><path d="M3.5 10.35h2.5M8 10.35h3.5" stroke-width="1.4"/></svg><svg style="left:333.75px;top:425.75px" width="18.5" height="18.5" viewBox="0 0 24 24" fill="none" stroke="#d4d4da" stroke-width="1.6" stroke-linecap="round" stroke-linejoin="round" ><path d="M6 9l6 6l6 -6"/></svg><svg style="left:356px;top:430px" width="14" height="14" viewBox="0 0 14 14" fill="none" stroke="#d4d4da" stroke-width="1.5" stroke-linecap="round" stroke-linejoin="round"><path d="M0.8 12V2.2a1.4 1.4 0 0 1 2.8 0V6.4L5.4 5.3L6.6 6.1L8.6 4.9L9.8 5.7L13.2 4V12a1.2 1.2 0 0 1 -1.2 1.2H2a1.2 1.2 0 0 1 -1.2 -1.2z"/><path d="M3.8 9.6h.9"/><path d="M6.6 9.6h.9"/><path d="M9.4 9.6h.9"/></svg><div class="t" style="left:376px;top:430.04px;font-size:14.4px;color:#e8e8ec;font-weight:400;font-style:normal;">Onshore site</div><div class="t" style="left:1061.4px;top:430.37px;font-size:14px;color:#c4c4cc;font-weight:400;font-style:normal;">68</div><svg style="left:0;top:0" width="1" height="1"><polygon points="1049.90,430.00 1055.96,433.50 1055.96,440.50 1049.90,444.00 1043.84,440.50 1043.84,433.50" fill="none" stroke="#c4c4cc" stroke-width="1.3" stroke-linejoin="round"/></svg><div class="t" style="left:1017.3000000000001px;top:430.37px;font-size:14px;color:#c4c4cc;font-weight:400;font-style:normal;">60</div><svg style="left:997.8000000000001px;top:430px" width="15" height="14" viewBox="0 0 15 14" fill="none" stroke="#c4c4cc" stroke-width="1.3"><rect x="3.2" y="0.9" width="8.6" height="5.2" rx="1"/><rect x="0.9" y="7.6" width="13.2" height="5.5" rx="1.2"/><path d="M3.5 10.35h2.5M8 10.35h3.5" stroke-width="1.4"/></svg><div class="abs" style="left:343px;top:455px;width:1px;height:108px;background:#4a4a54"></div><svg style="left:347.25px;top:462.25px" width="18.5" height="18.5" viewBox="0 0 24 24" fill="none" stroke="#d4d4da" stroke-width="1.6" stroke-linecap="round" stroke-linejoin="round" ><path d="M9 6l6 6l-6 6"/></svg><svg style="left:369px;top:466px" width="14" height="14" viewBox="0 0 14 14" fill="none" stroke="#d4d4da" stroke-width="1.5" stroke-linecap="round" stroke-linejoin="round"><path d="M2.3 0.8h3.2a1.5 1.5 0 0 1 1.5 1.5v3.2a1.5 1.5 0 0 1 -1.5 1.5h-3.2a1.5 1.5 0 0 1 -1.5 -1.5v-3.2a1.5 1.5 0 0 1 1.5 -1.5z"/><path d="M8.5 7h3.2a1.5 1.5 0 0 1 1.5 1.5v3.2a1.5 1.5 0 0 1 -1.5 1.5h-3.2a1.5 1.5 0 0 1 -1.5 -1.5v-3.2a1.5 1.5 0 0 1 1.5 -1.5z"/><path d="M3.9 7v2.4a0.8 0.8 0 0 0 0.8 0.8H7"/></svg><div class="t" style="left:389px;top:466.04px;font-size:14.4px;color:#e8e8ec;font-weight:400;font-style:normal;">S01: Salt water filtering</div><div class="t" style="left:1061.4px;top:466.37px;font-size:14px;color:#c4c4cc;font-weight:400;font-style:normal;">18</div><svg style="left:0;top:0" width="1" height="1"><polygon points="1049.90,466.00 1055.96,469.50 1055.96,476.50 1049.90,480.00 1043.84,476.50 1043.84,469.50" fill="none" stroke="#c4c4cc" stroke-width="1.3" stroke-linejoin="round"/></svg><div class="t" style="left:1017.3000000000001px;top:466.37px;font-size:14px;color:#c4c4cc;font-weight:400;font-style:normal;">19</div><svg style="left:997.8000000000001px;top:466px" width="15" height="14" viewBox="0 0 15 14" fill="none" stroke="#c4c4cc" stroke-width="1.3"><rect x="3.2" y="0.9" width="8.6" height="5.2" rx="1"/><rect x="0.9" y="7.6" width="13.2" height="5.5" rx="1.2"/><path d="M3.5 10.35h2.5M8 10.35h3.5" stroke-width="1.4"/></svg><svg style="left:347.25px;top:498.25px" width="18.5" height="18.5" viewBox="0 0 24 24" fill="none" stroke="#d4d4da" stroke-width="1.6" stroke-linecap="round" stroke-linejoin="round" ><path d="M9 6l6 6l-6 6"/></svg><svg style="left:369px;top:502px" width="14" height="14" viewBox="0 0 14 14" fill="none" stroke="#d4d4da" stroke-width="1.5" stroke-linecap="round" stroke-linejoin="round"><path d="M2.3 0.8h3.2a1.5 1.5 0 0 1 1.5 1.5v3.2a1.5 1.5 0 0 1 -1.5 1.5h-3.2a1.5 1.5 0 0 1 -1.5 -1.5v-3.2a1.5 1.5 0 0 1 1.5 -1.5z"/><path d="M8.5 7h3.2a1.5 1.5 0 0 1 1.5 1.5v3.2a1.5 1.5 0 0 1 -1.5 1.5h-3.2a1.5 1.5 0 0 1 -1.5 -1.5v-3.2a1.5 1.5 0 0 1 1.5 -1.5z"/><path d="M3.9 7v2.4a0.8 0.8 0 0 0 0.8 0.8H7"/></svg><div class="t" style="left:389px;top:502.04px;font-size:14.4px;color:#e8e8ec;font-weight:400;font-style:normal;">S02: Coagulation, sedimentation, and RO</div><div class="t" style="left:1061.4px;top:502.37px;font-size:14px;color:#c4c4cc;font-weight:400;font-style:normal;">34</div><svg style="left:0;top:0" width="1" height="1"><polygon points="1049.90,502.00 1055.96,505.50 1055.96,512.50 1049.90,516.00 1043.84,512.50 1043.84,505.50" fill="none" stroke="#c4c4cc" stroke-width="1.3" stroke-linejoin="round"/></svg><div class="t" style="left:1017.3000000000001px;top:502.37px;font-size:14px;color:#c4c4cc;font-weight:400;font-style:normal;">15</div><svg style="left:997.8000000000001px;top:502px" width="15" height="14" viewBox="0 0 15 14" fill="none" stroke="#c4c4cc" stroke-width="1.3"><rect x="3.2" y="0.9" width="8.6" height="5.2" rx="1"/><rect x="0.9" y="7.6" width="13.2" height="5.5" rx="1.2"/><path d="M3.5 10.35h2.5M8 10.35h3.5" stroke-width="1.4"/></svg><svg style="left:347.25px;top:534.25px" width="18.5" height="18.5" viewBox="0 0 24 24" fill="none" stroke="#d4d4da" stroke-width="1.6" stroke-linecap="round" stroke-linejoin="round" ><path d="M9 6l6 6l-6 6"/></svg><svg style="left:369px;top:538px" width="14" height="14" viewBox="0 0 14 14" fill="none" stroke="#d4d4da" stroke-width="1.5" stroke-linecap="round" stroke-linejoin="round"><path d="M2.3 0.8h3.2a1.5 1.5 0 0 1 1.5 1.5v3.2a1.5 1.5 0 0 1 -1.5 1.5h-3.2a1.5 1.5 0 0 1 -1.5 -1.5v-3.2a1.5 1.5 0 0 1 1.5 -1.5z"/><path d="M8.5 7h3.2a1.5 1.5 0 0 1 1.5 1.5v3.2a1.5 1.5 0 0 1 -1.5 1.5h-3.2a1.5 1.5 0 0 1 -1.5 -1.5v-3.2a1.5 1.5 0 0 1 1.5 -1.5z"/><path d="M3.9 7v2.4a0.8 0.8 0 0 0 0.8 0.8H7"/></svg><div class="t" style="left:389px;top:538.04px;font-size:14.4px;color:#e8e8ec;font-weight:400;font-style:normal;">S03: Clean water dosing and distribution</div><div class="t" style="left:1061.4px;top:538.37px;font-size:14px;color:#c4c4cc;font-weight:400;font-style:normal;">20</div><svg style="left:0;top:0" width="1" height="1"><polygon points="1049.90,538.00 1055.96,541.50 1055.96,548.50 1049.90,552.00 1043.84,548.50 1043.84,541.50" fill="none" stroke="#c4c4cc" stroke-width="1.3" stroke-linejoin="round"/></svg><div class="t" style="left:1017.3000000000001px;top:538.37px;font-size:14px;color:#c4c4cc;font-weight:400;font-style:normal;">21</div><svg style="left:997.8000000000001px;top:538px" width="15" height="14" viewBox="0 0 15 14" fill="none" stroke="#c4c4cc" stroke-width="1.3"><rect x="3.2" y="0.9" width="8.6" height="5.2" rx="1"/><rect x="0.9" y="7.6" width="13.2" height="5.5" rx="1.2"/><path d="M3.5 10.35h2.5M8 10.35h3.5" stroke-width="1.4"/></svg><svg style="left:356px;top:574px" width="14" height="14" viewBox="0 0 14 14" fill="none" stroke="#d4d4da" stroke-width="1.5" stroke-linecap="round" stroke-linejoin="round"><path d="M0.8 12V2.2a1.4 1.4 0 0 1 2.8 0V6.4L5.4 5.3L6.6 6.1L8.6 4.9L9.8 5.7L13.2 4V12a1.2 1.2 0 0 1 -1.2 1.2H2a1.2 1.2 0 0 1 -1.2 -1.2z"/><path d="M3.8 9.6h.9"/><path d="M6.6 9.6h.9"/><path d="M9.4 9.6h.9"/></svg><div class="t" style="left:376px;top:574.04px;font-size:14.4px;color:#e8e8ec;font-weight:400;font-style:normal;">Headquarter</div><div class="t" style="left:1069.2px;top:574.37px;font-size:14px;color:#c4c4cc;font-weight:400;font-style:normal;">2</div><svg style="left:0;top:0" width="1" height="1"><polygon points="1057.70,574.00 1063.76,577.50 1063.76,584.50 1057.70,588.00 1051.64,584.50 1051.64,577.50" fill="none" stroke="#c4c4cc" stroke-width="1.3" stroke-linejoin="round"/></svg><div class="t" style="left:1032.9px;top:574.37px;font-size:14px;color:#c4c4cc;font-weight:400;font-style:normal;">8</div><svg style="left:1013.4000000000001px;top:574px" width="15" height="14" viewBox="0 0 15 14" fill="none" stroke="#c4c4cc" stroke-width="1.3"><rect x="3.2" y="0.9" width="8.6" height="5.2" rx="1"/><rect x="0.9" y="7.6" width="13.2" height="5.5" rx="1.2"/><path d="M3.5 10.35h2.5M8 10.35h3.5" stroke-width="1.4"/></svg><div class="abs" style="left:314px;top:599px;width:778px;height:459px;border-radius:7px;background:#1a1a23;overflow:hidden"><div class="abs" style="left:0;top:0;width:778px;height:36px;background:#262630"></div></div><svg style="left:323.0px;top:608.0px" width="18" height="18" viewBox="0 0 24 24" fill="none" stroke="#d4d4da" stroke-width="1.6" stroke-linecap="round" stroke-linejoin="round" ><path d="M21 16.008v-8.018a1.98 1.98 0 0 0 -1 -1.717l-7 -4.008a2.016 2.016 0 0 0 -2 0l-7 4.008c-.619 .355 -1 1.01 -1 1.718v8.018c0 .709 .381 1.363 1 1.717l7 4.008a2.016 2.016 0 0 0 2 0l7 -4.008c.619 -.355 1 -1.01 1 -1.717z"/><path d="M12 22v-10"/><path d="M12 12l8.73 -5.04"/><path d="M3.27 6.96l8.73 5.04"/></svg><div class="t" style="left:377px;top:610.04px;font-size:14.4px;color:#d0d0d6;font-weight:400;font-style:normal;">Tanks 3D</div><div class="abs" style="left:466px;top:605px;width:58px;height:24px;border-radius:5px;border:1px solid #3c3c47"></div><svg style="left:0;top:0" width="1" height="1"><polygon points="476.50,611.40 481.35,614.20 481.35,619.80 476.50,622.60 471.65,619.80 471.65,614.20" fill="none" stroke="#d8d8de" stroke-width="1.3" stroke-linejoin="round"/></svg><div class="t" style="left:485px;top:610.04px;font-size:14.4px;color:#ececf0;font-weight:400;font-style:normal;">Drain</div><div class="abs" style="left:1099px;top:130px;width:780px;height:929px;border-radius:8px 8px 14px 8px;background:#1a1a23;border:1px solid #60606b;overflow:hidden"><div class="abs" style="left:0;top:0;width:780px;height:36px;background:#262630"></div></div><svg style="left:1111px;top:143px" width="13" height="13" viewBox="0 0 13 13" fill="none" stroke="#dcdce2"><path d="M2.1 2.4L3.1 7" stroke-width="1.4"/><path d="M5 7.6L8.3 4.8" stroke-width="1.4"/><path d="M5.8 10L9.5 10.8" stroke-width="1.4"/><circle cx="3.5" cy="9.25" r="2.45" stroke-width="2"/><circle cx="9.5" cy="3.5" r="1.75" stroke-width="1.35"/><circle cx="2.07" cy="2.0" r="2.0" fill="#dcdce2" stroke="none"/><circle cx="10.9" cy="10.8" r="2.0" fill="#dcdce2" stroke="none"/></svg><svg style="left:1128.0px;top:143.0px" width="12" height="12" viewBox="0 0 24 24" fill="none" stroke="#c0c0c8" stroke-width="2" stroke-linecap="round" stroke-linejoin="round" ><path d="M6 9l6 6l6 -6"/></svg><div class="t" style="left:1162px;top:142.04px;font-size:14.4px;color:#d0d0d6;font-weight:400;font-style:normal;">Network topology</div><svg style="left:1279.0px;top:143.0px" width="12" height="12" viewBox="0 0 24 24" fill="none" stroke="#c0c0c8" stroke-width="2" stroke-linecap="round" stroke-linejoin="round" ><path d="M6 9l6 6l6 -6"/></svg><div class="abs" style="left:1307px;top:137px;width:89px;height:24px;border-radius:5px;border:1px solid #43434d"></div><div class="t" style="left:1312px;top:142.04px;font-size:14.4px;color:#eaeaee;font-weight:400;font-style:italic;">No Focus</div><svg style="left:1378px;top:142px" width="12" height="14" viewBox="0 0 12 14" fill="none" stroke="#c8c8d0" stroke-width="1.3" stroke-linecap="round" stroke-linejoin="round"><path d="M3 1.2h6M4 1.2v4.3L1.6 8.6h8.8L8 5.5V1.2M6 8.6v4.4"/></svg><svg style="left:1416px;top:143px" width="16" height="12" viewBox="0 0 16 12" stroke="#c8c8d0" stroke-width="1.5" stroke-linecap="round"><path d="M1 1h14M3.5 6h9M5.5 11h5"/></svg><svg style="left:1805px;top:142px" width="14" height="14" viewBox="0 0 14 14" fill="none" stroke="#d4d4da" stroke-width="1.4" stroke-linecap="round" stroke-linejoin="round"><path d="M0.8 3.5v-1.2a1.5 1.5 0 0 1 1.5 -1.5h1.2M10.5 0.8h1.2a1.5 1.5 0 0 1 1.5 1.5v1.2M13.2 10.5v1.2a1.5 1.5 0 0 1 -1.5 1.5h-1.2M3.5 13.2h-1.2a1.5 1.5 0 0 1 -1.5 -1.5v-1.2"/><rect x="3.6" y="3.7" width="4.8" height="3.6" rx="1"/><rect x="5.6" y="6.7" width="4.8" height="3.6" rx="1"/></svg><svg style="left:1829px;top:142px" width="14" height="14" viewBox="0 0 14 14" fill="none" stroke="#d4d4da" stroke-width="1.4" stroke-linecap="round"><circle cx="3.5" cy="3.6" r="2.2"/><path d="M5.7 3.6h6.8"/><circle cx="10.5" cy="10.4" r="2.2"/><path d="M1.5 10.4h6.8"/></svg><svg style="left:1853px;top:142px" width="14" height="14" viewBox="0 0 14 14" fill="none" stroke="#d4d4da" stroke-width="1.4" stroke-linecap="round" stroke-linejoin="round"><path d="M3 11L11 3"/><path d="M8 0.8h5.2v5.2z" fill="#d4d4da"/><path d="M6 13.2h-5.2v-5.2z" fill="#d4d4da"/></svg><svg style="left:1841.5px;top:957.5px" width="17" height="17" viewBox="0 0 24 24" fill="none" stroke="#d4d4da" stroke-width="1.8" stroke-linecap="round" stroke-linejoin="round" ><path d="M10 10m-7 0a7 7 0 1 0 14 0a7 7 0 1 0 -14 0"/><path d="M7 10h6"/><path d="M10 7v6"/><path d="M21 21l-6 -6"/></svg><svg style="left:1841.5px;top:989.5px" width="17" height="17" viewBox="0 0 24 24" fill="none" stroke="#d4d4da" stroke-width="1.8" stroke-linecap="round" stroke-linejoin="round" ><path d="M10 10m-7 0a7 7 0 1 0 14 0a7 7 0 1 0 -14 0"/><path d="M7 10h6"/><path d="M21 21l-6 -6"/></svg><svg style="left:1843px;top:1023px" width="14" height="14" viewBox="0 0 14 14" fill="none" stroke="#d4d4da" stroke-width="1.4" stroke-linecap="round" stroke-linejoin="round"><path d="M0.8 3.5v-1.2a1.5 1.5 0 0 1 1.5 -1.5h1.2M10.5 0.8h1.2a1.5 1.5 0 0 1 1.5 1.5v1.2M13.2 10.5v1.2a1.5 1.5 0 0 1 -1.5 1.5h-1.2M3.5 13.2h-1.2a1.5 1.5 0 0 1 -1.5 -1.5v-1.2"/><rect x="3.8" y="4.5" width="6.4" height="5" rx="0.8"/></svg><svg style="left:0;top:0" width="1" height="1"><path d="M1420.4 234.5L1356.5 298.5" stroke="#6c6c76" stroke-width="1.2" fill="none"/><path d="M1356.50 298.50L1358.48 292.28L1362.72 296.52z" fill="#a4a4aa"/><path d="M1452.5 260L1457.6 297.5" stroke="#6c6c76" stroke-width="1.2" fill="none"/><path d="M1457.60 297.50L1453.85 292.16L1459.79 291.35z" fill="#a4a4aa"/><path d="M1341.8 342L1341.8 388.5" stroke="#6c6c76" stroke-width="1.2" fill="none"/><path d="M1341.80 388.50L1338.80 382.70L1344.80 382.70z" fill="#a4a4aa"/><path d="M1448 342L1432.5 389" stroke="#6c6c76" stroke-width="1.2" fill="none"/><path d="M1432.50 389.00L1431.47 382.55L1437.17 384.43z" fill="#a4a4aa"/><path d="M1473.5 342L1487.5 389" stroke="#6c6c76" stroke-width="1.2" fill="none"/><path d="M1487.50 389.00L1482.97 384.30L1488.72 382.58z" fill="#a4a4aa"/><path d="M1477.5 333L1566 397" stroke="#6c6c76" stroke-width="1.2" fill="none"/><path d="M1566.00 397.00L1559.54 396.03L1563.06 391.17z" fill="#a4a4aa"/><path d="M1341.8 465L1341.8 493.5" stroke="#6c6c76" stroke-width="1.2" fill="none"/><path d="M1341.80 493.50L1338.80 487.70L1344.80 487.70z" fill="#a4a4aa"/><path d="M1341.8 539L1341.8 585.5" stroke="#6c6c76" stroke-width="1.2" fill="none"/><path d="M1341.80 585.50L1338.80 579.70L1344.80 579.70z" fill="#a4a4aa"/><path d="M1341.8 662L1341.8 690.5" stroke="#6c6c76" stroke-width="1.2" fill="none"/><path d="M1341.80 690.50L1338.80 684.70L1344.80 684.70z" fill="#a4a4aa"/><path d="M1333.5 736L1313 783" stroke="#6c6c76" stroke-width="1.2" fill="none"/><path d="M1313.00 783.00L1312.57 776.48L1318.07 778.88z" fill="#a4a4aa"/><path d="M1350 736L1368.5 783" stroke="#6c6c76" stroke-width="1.2" fill="none"/><path d="M1368.50 783.00L1363.58 778.70L1369.17 776.50z" fill="#a4a4aa"/><path d="M1359.5 727L1470.5 793.5" stroke="#6c6c76" stroke-width="1.2" fill="none"/><path d="M1470.50 793.50L1463.98 793.09L1467.07 787.95z" fill="#a4a4aa"/><path d="M1380.7 859L1380.7 887.5" stroke="#6c6c76" stroke-width="1.2" fill="none"/><path d="M1380.70 887.50L1377.70 881.70L1383.70 881.70z" fill="#a4a4aa"/><path d="M1380.7 933L1380.7 979.5" stroke="#6c6c76" stroke-width="1.2" fill="none"/><path d="M1380.70 979.50L1377.70 973.70L1383.70 973.70z" fill="#a4a4aa"/><path d="M1495.7 859L1495.7 887.5" stroke="#6c6c76" stroke-width="1.2" fill="none"/><path d="M1495.70 887.50L1492.70 881.70L1498.70 881.70z" fill="#a4a4aa"/><path d="M1495.7 933L1495.7 979.5" stroke="#6c6c76" stroke-width="1.2" fill="none"/><path d="M1495.70 979.50L1492.70 973.70L1498.70 973.70z" fill="#a4a4aa"/><circle cx="1441.4" cy="214" r="28.6" fill="#23232d" stroke="#5e5e68" stroke-width="1.3"/><circle cx="1530" cy="214" r="28.6" fill="#23232d" stroke="#5e5e68" stroke-width="1.3"/><circle cx="1647" cy="214" r="28.6" fill="#23232d" stroke="#5e5e68" stroke-width="1.3"/><polygon points="1364.80,319.30 1353.30,339.82 1330.30,339.82 1318.80,319.30 1330.30,298.78 1353.30,298.78" fill="#23232d" stroke="#5e5e68" stroke-width="1.3" stroke-linejoin="round"/><polygon points="1483.70,319.30 1472.20,339.82 1449.20,339.82 1437.70,319.30 1449.20,298.78 1472.20,298.78" fill="#23232d" stroke="#5e5e68" stroke-width="1.3" stroke-linejoin="round"/><circle cx="1341.8" cy="417.6" r="28.6" fill="#23232d" stroke="#5e5e68" stroke-width="1.3"/><circle cx="1421.8" cy="417.6" r="28.6" fill="#23232d" stroke="#5e5e68" stroke-width="1.3"/><circle cx="1499.9" cy="417.6" r="28.6" fill="#23232d" stroke="#5e5e68" stroke-width="1.3"/><circle cx="1588.6" cy="417.6" r="28.6" fill="#23232d" stroke="#5e5e68" stroke-width="1.3"/><polygon points="1364.80,516.20 1353.30,536.72 1330.30,536.72 1318.80,516.20 1330.30,495.68 1353.30,495.68" fill="#23232d" stroke="#5e5e68" stroke-width="1.3" stroke-linejoin="round"/><circle cx="1341.8" cy="614.6" r="28.6" fill="#23232d" stroke="#5e5e68" stroke-width="1.3"/><polygon points="1364.80,713.40 1353.30,733.92 1330.30,733.92 1318.80,713.40 1330.30,692.88 1353.30,692.88" fill="#23232d" stroke="#5e5e68" stroke-width="1.3" stroke-linejoin="round"/><circle cx="1302.4" cy="811.6" r="28.6" fill="#23232d" stroke="#5e5e68" stroke-width="1.3"/><circle cx="1380.8" cy="811.6" r="28.6" fill="#23232d" stroke="#5e5e68" stroke-width="1.3"/><circle cx="1495.9" cy="811.6" r="28.6" fill="#23232d" stroke="#5e5e68" stroke-width="1.3"/><polygon points="1403.70,910.20 1392.20,930.72 1369.20,930.72 1357.70,910.20 1369.20,889.68 1392.20,889.68" fill="#23232d" stroke="#5e5e68" stroke-width="1.3" stroke-linejoin="round"/><polygon points="1518.70,910.20 1507.20,930.72 1484.20,930.72 1472.70,910.20 1484.20,889.68 1507.20,889.68" fill="#23232d" stroke="#5e5e68" stroke-width="1.3" stroke-linejoin="round"/><circle cx="1380.7" cy="1008.6" r="28.6" fill="#23232d" stroke="#5e5e68" stroke-width="1.3"/><circle cx="1495.7" cy="1008.6" r="28.6" fill="#23232d" stroke="#5e5e68" stroke-width="1.3"/></svg><svg style="left:1429.9px;top:202.7px" width="23" height="23" viewBox="0 0 13 13" fill="none" stroke="#d2d2d8"><path d="M2.1 2.4L3.1 7" stroke-width="1.4"/><path d="M5 7.6L8.3 4.8" stroke-width="1.4"/><path d="M5.8 10L9.5 10.8" stroke-width="1.4"/><circle cx="3.5" cy="9.25" r="2.45" stroke-width="2"/><circle cx="9.5" cy="3.5" r="1.75" stroke-width="1.35"/><circle cx="2.07" cy="2.0" r="2.0" fill="#d2d2d8" stroke="none"/><circle cx="10.9" cy="10.8" r="2.0" fill="#d2d2d8" stroke="none"/></svg><svg style="left:1518.5px;top:202.7px" width="23" height="23" viewBox="0 0 13 13" fill="none" stroke="#d2d2d8"><path d="M2.1 2.4L3.1 7" stroke-width="1.4"/><path d="M5 7.6L8.3 4.8" stroke-width="1.4"/><path d="M5.8 10L9.5 10.8" stroke-width="1.4"/><circle cx="3.5" cy="9.25" r="2.45" stroke-width="2"/><circle cx="9.5" cy="3.5" r="1.75" stroke-width="1.35"/><circle cx="2.07" cy="2.0" r="2.0" fill="#d2d2d8" stroke="none"/><circle cx="10.9" cy="10.8" r="2.0" fill="#d2d2d8" stroke="none"/></svg><svg style="left:1635.5px;top:202.7px" width="23" height="23" viewBox="0 0 13 13" fill="none" stroke="#d2d2d8"><path d="M2.1 2.4L3.1 7" stroke-width="1.4"/><path d="M5 7.6L8.3 4.8" stroke-width="1.4"/><path d="M5.8 10L9.5 10.8" stroke-width="1.4"/><circle cx="3.5" cy="9.25" r="2.45" stroke-width="2"/><circle cx="9.5" cy="3.5" r="1.75" stroke-width="1.35"/><circle cx="2.07" cy="2.0" r="2.0" fill="#d2d2d8" stroke="none"/><circle cx="10.9" cy="10.8" r="2.0" fill="#d2d2d8" stroke="none"/></svg><svg style="left:1330.3px;top:406.3px" width="23" height="23" viewBox="0 0 13 13" fill="none" stroke="#d2d2d8"><path d="M2.1 2.4L3.1 7" stroke-width="1.4"/><path d="M5 7.6L8.3 4.8" stroke-width="1.4"/><path d="M5.8 10L9.5 10.8" stroke-width="1.4"/><circle cx="3.5" cy="9.25" r="2.45" stroke-width="2"/><circle cx="9.5" cy="3.5" r="1.75" stroke-width="1.35"/><circle cx="2.07" cy="2.0" r="2.0" fill="#d2d2d8" stroke="none"/><circle cx="10.9" cy="10.8" r="2.0" fill="#d2d2d8" stroke="none"/></svg><svg style="left:1410.3px;top:406.3px" width="23" height="23" viewBox="0 0 13 13" fill="none" stroke="#d2d2d8"><path d="M2.1 2.4L3.1 7" stroke-width="1.4"/><path d="M5 7.6L8.3 4.8" stroke-width="1.4"/><path d="M5.8 10L9.5 10.8" stroke-width="1.4"/><circle cx="3.5" cy="9.25" r="2.45" stroke-width="2"/><circle cx="9.5" cy="3.5" r="1.75" stroke-width="1.35"/><circle cx="2.07" cy="2.0" r="2.0" fill="#d2d2d8" stroke="none"/><circle cx="10.9" cy="10.8" r="2.0" fill="#d2d2d8" stroke="none"/></svg><svg style="left:1488.4px;top:406.3px" width="23" height="23" viewBox="0 0 13 13" fill="none" stroke="#d2d2d8"><path d="M2.1 2.4L3.1 7" stroke-width="1.4"/><path d="M5 7.6L8.3 4.8" stroke-width="1.4"/><path d="M5.8 10L9.5 10.8" stroke-width="1.4"/><circle cx="3.5" cy="9.25" r="2.45" stroke-width="2"/><circle cx="9.5" cy="3.5" r="1.75" stroke-width="1.35"/><circle cx="2.07" cy="2.0" r="2.0" fill="#d2d2d8" stroke="none"/><circle cx="10.9" cy="10.8" r="2.0" fill="#d2d2d8" stroke="none"/></svg><svg style="left:1577.1px;top:406.3px" width="23" height="23" viewBox="0 0 13 13" fill="none" stroke="#d2d2d8"><path d="M2.1 2.4L3.1 7" stroke-width="1.4"/><path d="M5 7.6L8.3 4.8" stroke-width="1.4"/><path d="M5.8 10L9.5 10.8" stroke-width="1.4"/><circle cx="3.5" cy="9.25" r="2.45" stroke-width="2"/><circle cx="9.5" cy="3.5" r="1.75" stroke-width="1.35"/><circle cx="2.07" cy="2.0" r="2.0" fill="#d2d2d8" stroke="none"/><circle cx="10.9" cy="10.8" r="2.0" fill="#d2d2d8" stroke="none"/></svg><svg style="left:1330.3px;top:603.3000000000001px" width="23" height="23" viewBox="0 0 13 13" fill="none" stroke="#d2d2d8"><path d="M2.1 2.4L3.1 7" stroke-width="1.4"/><path d="M5 7.6L8.3 4.8" stroke-width="1.4"/><path d="M5.8 10L9.5 10.8" stroke-width="1.4"/><circle cx="3.5" cy="9.25" r="2.45" stroke-width="2"/><circle cx="9.5" cy="3.5" r="1.75" stroke-width="1.35"/><circle cx="2.07" cy="2.0" r="2.0" fill="#d2d2d8" stroke="none"/><circle cx="10.9" cy="10.8" r="2.0" fill="#d2d2d8" stroke="none"/></svg><svg style="left:1290.9px;top:800.3000000000001px" width="23" height="23" viewBox="0 0 13 13" fill="none" stroke="#d2d2d8"><path d="M2.1 2.4L3.1 7" stroke-width="1.4"/><path d="M5 7.6L8.3 4.8" stroke-width="1.4"/><path d="M5.8 10L9.5 10.8" stroke-width="1.4"/><circle cx="3.5" cy="9.25" r="2.45" stroke-width="2"/><circle cx="9.5" cy="3.5" r="1.75" stroke-width="1.35"/><circle cx="2.07" cy="2.0" r="2.0" fill="#d2d2d8" stroke="none"/><circle cx="10.9" cy="10.8" r="2.0" fill="#d2d2d8" stroke="none"/></svg><svg style="left:1369.3px;top:800.3000000000001px" width="23" height="23" viewBox="0 0 13 13" fill="none" stroke="#d2d2d8"><path d="M2.1 2.4L3.1 7" stroke-width="1.4"/><path d="M5 7.6L8.3 4.8" stroke-width="1.4"/><path d="M5.8 10L9.5 10.8" stroke-width="1.4"/><circle cx="3.5" cy="9.25" r="2.45" stroke-width="2"/><circle cx="9.5" cy="3.5" r="1.75" stroke-width="1.35"/><circle cx="2.07" cy="2.0" r="2.0" fill="#d2d2d8" stroke="none"/><circle cx="10.9" cy="10.8" r="2.0" fill="#d2d2d8" stroke="none"/></svg><svg style="left:1484.4px;top:800.3000000000001px" width="23" height="23" viewBox="0 0 13 13" fill="none" stroke="#d2d2d8"><path d="M2.1 2.4L3.1 7" stroke-width="1.4"/><path d="M5 7.6L8.3 4.8" stroke-width="1.4"/><path d="M5.8 10L9.5 10.8" stroke-width="1.4"/><circle cx="3.5" cy="9.25" r="2.45" stroke-width="2"/><circle cx="9.5" cy="3.5" r="1.75" stroke-width="1.35"/><circle cx="2.07" cy="2.0" r="2.0" fill="#d2d2d8" stroke="none"/><circle cx="10.9" cy="10.8" r="2.0" fill="#d2d2d8" stroke="none"/></svg><svg style="left:1369.2px;top:997.3000000000001px" width="23" height="23" viewBox="0 0 13 13" fill="none" stroke="#d2d2d8"><path d="M2.1 2.4L3.1 7" stroke-width="1.4"/><path d="M5 7.6L8.3 4.8" stroke-width="1.4"/><path d="M5.8 10L9.5 10.8" stroke-width="1.4"/><circle cx="3.5" cy="9.25" r="2.45" stroke-width="2"/><circle cx="9.5" cy="3.5" r="1.75" stroke-width="1.35"/><circle cx="2.07" cy="2.0" r="2.0" fill="#d2d2d8" stroke="none"/><circle cx="10.9" cy="10.8" r="2.0" fill="#d2d2d8" stroke="none"/></svg><svg style="left:1484.2px;top:997.3000000000001px" width="23" height="23" viewBox="0 0 13 13" fill="none" stroke="#d2d2d8"><path d="M2.1 2.4L3.1 7" stroke-width="1.4"/><path d="M5 7.6L8.3 4.8" stroke-width="1.4"/><path d="M5.8 10L9.5 10.8" stroke-width="1.4"/><circle cx="3.5" cy="9.25" r="2.45" stroke-width="2"/><circle cx="9.5" cy="3.5" r="1.75" stroke-width="1.35"/><circle cx="2.07" cy="2.0" r="2.0" fill="#d2d2d8" stroke="none"/><circle cx="10.9" cy="10.8" r="2.0" fill="#d2d2d8" stroke="none"/></svg><svg style="left:1333.8999999999999px;top:311.40000000000003px" width="16" height="16" viewBox="0 0 16 16" fill="none" stroke="#d2d2d8" stroke-width="1.35" stroke-linecap="round" stroke-linejoin="round"><rect x="0.8" y="0.8" width="14.4" height="14.4" rx="2.2"/><path d="M0.8 5.6h14.4M0.8 10.2h6.6M9.8 0.8v4.8M4.6 5.6v4.6M7.2 10.2v5"/><path d="M11.2 6.6c1.7 1.4 3 2.9 3 4.9a2.7 2.7 0 0 1 -5.4 0c0 -1 .5 -1.7 1.1 -2.2c0 .7 .4 1.2 1 1.2c.6 0 .8 -.6 .3 -1.5z" stroke-width="1.2" fill="#23232d"/></svg><svg style="left:1452.8px;top:311.40000000000003px" width="16" height="16" viewBox="0 0 16 16" fill="none" stroke="#d2d2d8" stroke-width="1.35" stroke-linecap="round" stroke-linejoin="round"><rect x="0.8" y="0.8" width="14.4" height="14.4" rx="2.2"/><path d="M0.8 5.6h14.4M0.8 10.2h6.6M9.8 0.8v4.8M4.6 5.6v4.6M7.2 10.2v5"/><path d="M11.2 6.6c1.7 1.4 3 2.9 3 4.9a2.7 2.7 0 0 1 -5.4 0c0 -1 .5 -1.7 1.1 -2.2c0 .7 .4 1.2 1 1.2c.6 0 .8 -.6 .3 -1.5z" stroke-width="1.2" fill="#23232d"/></svg><svg style="left:1333.8999999999999px;top:508.30000000000007px" width="16" height="16" viewBox="0 0 16 16" fill="none" stroke="#d2d2d8" stroke-width="1.35" stroke-linecap="round" stroke-linejoin="round"><rect x="0.8" y="0.8" width="14.4" height="14.4" rx="2.2"/><path d="M0.8 5.6h14.4M0.8 10.2h6.6M9.8 0.8v4.8M4.6 5.6v4.6M7.2 10.2v5"/><path d="M11.2 6.6c1.7 1.4 3 2.9 3 4.9a2.7 2.7 0 0 1 -5.4 0c0 -1 .5 -1.7 1.1 -2.2c0 .7 .4 1.2 1 1.2c.6 0 .8 -.6 .3 -1.5z" stroke-width="1.2" fill="#23232d"/></svg><svg style="left:1333.8999999999999px;top:705.5px" width="16" height="16" viewBox="0 0 16 16" fill="none" stroke="#d2d2d8" stroke-width="1.35" stroke-linecap="round" stroke-linejoin="round"><rect x="0.8" y="0.8" width="14.4" height="14.4" rx="2.2"/><path d="M0.8 5.6h14.4M0.8 10.2h6.6M9.8 0.8v4.8M4.6 5.6v4.6M7.2 10.2v5"/><path d="M11.2 6.6c1.7 1.4 3 2.9 3 4.9a2.7 2.7 0 0 1 -5.4 0c0 -1 .5 -1.7 1.1 -2.2c0 .7 .4 1.2 1 1.2c.6 0 .8 -.6 .3 -1.5z" stroke-width="1.2" fill="#23232d"/></svg><svg style="left:1372.8px;top:902.3000000000001px" width="16" height="16" viewBox="0 0 16 16" fill="none" stroke="#d2d2d8" stroke-width="1.35" stroke-linecap="round" stroke-linejoin="round"><rect x="0.8" y="0.8" width="14.4" height="14.4" rx="2.2"/><path d="M0.8 5.6h14.4M0.8 10.2h6.6M9.8 0.8v4.8M4.6 5.6v4.6M7.2 10.2v5"/><path d="M11.2 6.6c1.7 1.4 3 2.9 3 4.9a2.7 2.7 0 0 1 -5.4 0c0 -1 .5 -1.7 1.1 -2.2c0 .7 .4 1.2 1 1.2c.6 0 .8 -.6 .3 -1.5z" stroke-width="1.2" fill="#23232d"/></svg><svg style="left:1487.8px;top:902.3000000000001px" width="16" height="16" viewBox="0 0 16 16" fill="none" stroke="#d2d2d8" stroke-width="1.35" stroke-linecap="round" stroke-linejoin="round"><rect x="0.8" y="0.8" width="14.4" height="14.4" rx="2.2"/><path d="M0.8 5.6h14.4M0.8 10.2h6.6M9.8 0.8v4.8M4.6 5.6v4.6M7.2 10.2v5"/><path d="M11.2 6.6c1.7 1.4 3 2.9 3 4.9a2.7 2.7 0 0 1 -5.4 0c0 -1 .5 -1.7 1.1 -2.2c0 .7 .4 1.2 1 1.2c.6 0 .8 -.6 .3 -1.5z" stroke-width="1.2" fill="#23232d"/></svg><div class="t" style="left:1419.0203125px;top:245.84px;font-size:13.2px;color:#d0d0d6;font-weight:400;font-style:normal;">Internet</div><div class="t" style="left:1499.92109375px;top:245.84px;font-size:13.2px;color:#d0d0d6;font-weight:400;font-style:normal;">Enterprise</div><div class="t" style="left:1491.47890625px;top:259.44px;font-size:13.2px;color:#d0d0d6;font-weight:400;font-style:normal;">Management</div><div class="t" style="left:1591.60234375px;top:245.84px;font-size:13.2px;color:#d0d0d6;font-weight:400;font-style:normal;">Plant Management</div><div class="t" style="left:1311.72109375px;top:449.44px;font-size:13.2px;color:#d0d0d6;font-weight:400;font-style:normal;">Enterprise</div><div class="t" style="left:1415.9351562499999px;top:449.44px;font-size:13.2px;color:#d0d0d6;font-weight:400;font-style:normal;">IT</div><div class="t" style="left:1478.625px;top:449.44px;font-size:13.2px;color:#d0d0d6;font-weight:400;font-style:normal;">Control</div><div class="t" style="left:1550.0789062499998px;top:449.44px;font-size:13.2px;color:#d0d0d6;font-weight:400;font-style:normal;">Management</div><div class="t" style="left:1327.5046875px;top:646.44px;font-size:13.2px;color:#d0d0d6;font-weight:400;font-style:normal;">DMZ</div><div class="t" style="left:1283.6867187500002px;top:843.44px;font-size:13.2px;color:#d0d0d6;font-weight:400;font-style:normal;">Scada</div><div class="t" style="left:1354.87421875px;top:843.44px;font-size:13.2px;color:#d0d0d6;font-weight:400;font-style:normal;">VLAN 11</div><div class="t" style="left:1469.484375px;top:843.44px;font-size:13.2px;color:#d0d0d6;font-weight:400;font-style:normal;">VLAN 23</div><div class="t" style="left:1334.4765625px;top:1040.44px;font-size:13.2px;color:#d0d0d6;font-weight:400;font-style:normal;">Oil separation 1</div><div class="t" style="left:1449.4765625px;top:1040.44px;font-size:13.2px;color:#d0d0d6;font-weight:400;font-style:normal;">Oil separation 2</div><svg style="left:0;top:0" width="1" height="1"><defs><linearGradient id="gBody" x1="0" y1="0" x2="1" y2="0"><stop offset="0" stop-color="#969696"/><stop offset="0.25" stop-color="#cdcdcd"/><stop offset="0.7" stop-color="#dedede"/><stop offset="1" stop-color="#c6c6c6"/></linearGradient><linearGradient id="gTop" x1="0" y1="0" x2="0" y2="1"><stop offset="0" stop-color="#cfcfcf"/><stop offset="1" stop-color="#dadada"/></linearGradient><linearGradient id="gPurple" x1="0" y1="0" x2="1" y2="0"><stop offset="0" stop-color="#5e12b8"/><stop offset="0.5" stop-color="#6c10d0"/><stop offset="1" stop-color="#5a0cb0"/></linearGradient><linearGradient id="gBig" x1="0" y1="0" x2="1" y2="0"><stop offset="0" stop-color="#6e6e6e"/><stop offset="0.5" stop-color="#a8a8a8"/><stop offset="1" stop-color="#bcbcbc"/></linearGradient><linearGradient id="gBox" x1="0" y1="0" x2="1" y2="1"><stop offset="0" stop-color="#d8d8d8"/><stop offset="1" stop-color="#c0c0c0"/></linearGradient><clipPath id="cp3d"><path d="M314 635H1092V1051A7 7 0 0 1 1085 1058H321A7 7 0 0 1 314 1051Z"/></clipPath></defs><g clip-path="url(#cp3d)"><polygon points="384.4,762.7 513.6,735.3 540.3,812.0 540.5,813.5 540.3,815.2 539.9,816.9 539.0,818.7 537.8,820.5 536.3,822.3 534.5,824.2 532.4,826.1 529.9,827.9 527.2,829.8 524.2,831.6 521.0,833.5 517.5,835.2 513.9,836.9 510.0,838.6 506.0,840.1 501.8,841.6 497.6,843.0 493.2,844.2 488.8,845.4 484.4,846.4 480.0,847.4 475.6,848.1 471.2,848.8 466.9,849.3 462.8,849.7 458.7,849.9 454.8,849.9 451.1,849.9 447.6,849.6 444.3,849.3 441.3,848.8 438.5,848.1 436.1,847.3 433.9,846.4 432.0,845.3 430.4,844.2 429.2,842.9 428.3,841.5 427.7,840.0" fill="url(#gBody)" stroke="#ffffff" stroke-width="1.2"/><polygon points="513.6,735.3 513.7,737.5 513.1,739.8 511.7,742.3 509.8,744.8 507.1,747.4 503.8,750.0 499.9,752.5 495.4,755.1 490.5,757.6 485.1,759.9 479.2,762.2 473.1,764.3 466.7,766.2 460.1,768.0 453.4,769.5 446.6,770.9 439.8,771.9 433.2,772.8 426.7,773.3 420.5,773.7 414.6,773.7 409.0,773.4 403.9,772.9 399.3,772.2 395.3,771.2 391.8,769.9 389.0,768.4 386.8,766.7 385.3,764.8 384.4,762.7 384.3,760.5 384.9,758.2 386.3,755.7 388.2,753.2 390.9,750.6 394.2,748.0 398.1,745.5 402.6,742.9 407.5,740.4 412.9,738.1 418.8,735.8 424.9,733.7 431.3,731.8 437.9,730.0 444.6,728.5 451.4,727.1 458.2,726.1 464.8,725.2 471.3,724.7 477.5,724.3 483.4,724.3 489.0,724.6 494.1,725.1 498.7,725.8 502.7,726.8 506.2,728.1 509.0,729.6 511.2,731.3 512.7,733.2 513.6,735.3" fill="url(#gTop)" stroke="#ffffff" stroke-width="1.6"/><polygon points="657.7,842.9 657.6,844.8 656.9,846.8 655.7,848.8 653.9,850.7 651.7,852.6 649.0,854.4 645.8,856.0 642.3,857.4 638.4,858.7 634.3,859.8 630.0,860.7 625.6,861.3 621.1,861.7 616.6,861.9 612.3,861.7 608.0,861.4 604.0,860.8 600.3,860.0 596.9,858.9 593.9,857.7 591.4,856.2 589.3,854.6 587.8,852.9 586.7,851.0 586.3,849.1 586.4,847.2 587.1,845.2 588.3,843.2 590.1,841.3 592.3,839.4 595.0,837.6 598.2,836.0 601.7,834.6 605.6,833.3 609.7,832.2 614.0,831.3 618.4,830.7 622.9,830.3 627.4,830.1 631.7,830.3 636.0,830.6 640.0,831.2 643.7,832.0 647.1,833.1 650.1,834.3 652.6,835.8 654.7,837.4 656.2,839.1 657.3,841.0 657.7,842.9" fill="#4a4a4a" stroke="#e8e8e8" stroke-width="1.2"/><polygon points="654.1,841.2 654.0,842.7 653.4,844.2 652.3,845.7 650.6,847.2 648.6,848.6 646.1,849.9 643.3,851.2 640.1,852.3 636.6,853.3 632.9,854.2 629.0,854.9 625.0,855.5 621.0,855.8 617.0,856.0 613.0,856.0 609.2,855.7 605.6,855.3 602.3,854.8 599.3,854.0 596.6,853.1 594.3,852.1 592.5,850.9 591.1,849.6 590.2,848.2 589.9,846.8 590.0,845.3 590.6,843.8 591.7,842.3 593.4,840.8 595.4,839.4 597.9,838.1 600.7,836.8 603.9,835.7 607.4,834.7 611.1,833.8 615.0,833.1 619.0,832.5 623.0,832.2 627.0,832.0 631.0,832.0 634.8,832.3 638.4,832.7 641.7,833.2 644.7,834.0 647.4,834.9 649.7,835.9 651.5,837.1 652.9,838.4 653.8,839.8 654.1,841.2" fill="#2e2e2e"/><polygon points="578.1,755.9 643.9,750.1 651.9,835.2 651.9,836.2 651.6,837.1 651.2,838.1 650.6,839.0 649.9,840.0 648.9,840.9 647.7,841.9 646.4,842.8 644.9,843.6 643.3,844.5 641.5,845.3 639.6,846.0 637.5,846.7 635.4,847.4 633.2,848.0 630.8,848.5 628.5,849.0 626.0,849.4 623.5,849.7 621.0,850.0 618.5,850.1 616.0,850.2 613.6,850.3 611.1,850.2 608.8,850.1 606.5,849.9 604.2,849.6 602.1,849.3 600.1,848.9 598.2,848.4 596.4,847.9 594.8,847.3 593.4,846.6 592.1,845.9 590.9,845.2 590.0,844.3 589.2,843.5 588.7,842.6 588.3,841.7 588.1,840.8" fill="url(#gBody)" stroke="#ffffff" stroke-width="1.2"/><polygon points="643.9,750.1 643.8,751.5 643.4,752.9 642.6,754.3 641.5,755.6 640.0,757.0 638.3,758.3 636.2,759.5 633.8,760.7 631.2,761.8 628.4,762.8 625.4,763.7 622.2,764.4 618.9,765.1 615.6,765.6 612.1,766.0 608.7,766.2 605.3,766.3 601.9,766.2 598.7,766.0 595.5,765.7 592.6,765.2 589.8,764.5 587.3,763.8 585.1,762.9 583.1,762.0 581.4,760.9 580.1,759.7 579.1,758.5 578.4,757.2 578.1,755.9 578.2,754.5 578.6,753.1 579.4,751.7 580.5,750.4 582.0,749.0 583.7,747.7 585.8,746.5 588.2,745.3 590.8,744.2 593.6,743.2 596.6,742.3 599.8,741.6 603.1,740.9 606.4,740.4 609.9,740.0 613.3,739.8 616.7,739.7 620.1,739.8 623.3,740.0 626.5,740.3 629.4,740.8 632.2,741.5 634.7,742.2 636.9,743.1 638.9,744.0 640.6,745.1 641.9,746.3 642.9,747.5 643.6,748.8 643.9,750.1" fill="url(#gTop)" stroke="#ffffff" stroke-width="1.6"/><polygon points="635,716 691.6,694.6 763,709 714,732" fill="#dedede" stroke="#fafafa" stroke-width="1.2"/><polygon points="635,716 714,732 711,794 646,781" fill="#cfcfcf" stroke="#fafafa" stroke-width="1.2"/><polygon points="714,732 763,709 758,774 711,794" fill="#b4b4b4" stroke="#fafafa" stroke-width="1.2"/><polygon points="664,742 698,750 696.5,776 665.6,764.5" fill="#9a9a9a"/><polygon points="670,750 696,756 695,774 671,764" fill="#7e7e7e"/><polygon points="670,764 680,756 695,762 695,774" fill="#b8b8b8"/><circle cx="591" cy="758" r="2" fill="#c89020"/><circle cx="601" cy="760" r="2" fill="#c89020"/><circle cx="612" cy="759" r="2" fill="#c89020"/><polygon points="582,818 594,822 608,830 610,843 590,840" fill="#cf9620"/><polygon points="596,824 606,828 610,843 603,842" fill="#a87410"/><polygon points="560.2,911.7 560.5,914.3 560.2,917.0 559.2,919.9 557.6,922.8 555.3,925.7 552.4,928.5 549.0,931.3 545.2,933.9 540.8,936.4 536.2,938.6 531.2,940.6 526.0,942.3 520.7,943.8 515.4,944.9 510.1,945.6 504.9,946.0 499.9,946.0 495.3,945.7 490.9,945.0 487.0,944.0 483.6,942.6 480.8,940.9 478.5,938.9 476.8,936.7 475.8,934.3 475.5,931.7 475.8,929.0 476.8,926.1 478.4,923.2 480.7,920.3 483.6,917.5 487.0,914.7 490.8,912.1 495.2,909.6 499.8,907.4 504.8,905.4 510.0,903.7 515.3,902.2 520.6,901.1 525.9,900.4 531.1,900.0 536.1,900.0 540.7,900.3 545.1,901.0 549.0,902.0 552.4,903.4 555.2,905.1 557.5,907.1 559.2,909.3 560.2,911.7" fill="#4a4a4a" stroke="#e8e8e8" stroke-width="1.2"/><polygon points="556.0,910.8 556.2,912.8 555.8,914.9 554.8,917.1 553.2,919.3 551.1,921.6 548.4,923.9 545.3,926.1 541.8,928.3 537.8,930.3 533.6,932.2 529.1,933.9 524.4,935.4 519.6,936.7 514.9,937.7 510.1,938.5 505.5,939.0 501.1,939.2 496.9,939.1 493.1,938.7 489.7,938.1 486.7,937.2 484.2,936.0 482.2,934.6 480.8,933.0 480.0,931.2 479.8,929.2 480.2,927.1 481.2,924.9 482.8,922.7 484.9,920.4 487.6,918.1 490.7,915.9 494.2,913.7 498.2,911.7 502.4,909.8 506.9,908.1 511.6,906.6 516.4,905.3 521.1,904.3 525.9,903.5 530.5,903.0 534.9,902.8 539.1,902.9 542.9,903.3 546.3,903.9 549.3,904.8 551.8,906.0 553.8,907.4 555.2,909.0 556.0,910.8" fill="#2e2e2e"/><polygon points="430.6,822.4 523.4,797.6 553.7,904.9 553.9,906.1 553.9,907.4 553.6,908.8 553.1,910.2 552.4,911.6 551.4,913.0 550.3,914.5 548.9,915.9 547.3,917.4 545.6,918.8 543.6,920.2 541.5,921.6 539.2,922.9 536.8,924.2 534.2,925.4 531.6,926.6 528.8,927.7 526.0,928.7 523.1,929.6 520.1,930.5 517.2,931.2 514.2,931.8 511.2,932.4 508.3,932.8 505.4,933.1 502.6,933.4 499.8,933.5 497.2,933.4 494.7,933.3 492.3,933.1 490.0,932.7 488.0,932.3 486.0,931.7 484.3,931.0 482.8,930.2 481.5,929.4 480.3,928.4 479.4,927.4 478.8,926.3 478.3,925.1" fill="url(#gBody)" stroke="#ffffff" stroke-width="1.2"/><polygon points="523.4,797.6 523.6,799.6 523.4,801.7 522.6,803.9 521.4,806.1 519.6,808.4 517.4,810.7 514.7,813.0 511.7,815.3 508.2,817.5 504.4,819.7 500.4,821.7 496.0,823.6 491.4,825.4 486.7,827.0 481.9,828.4 477.0,829.6 472.2,830.5 467.3,831.3 462.6,831.8 458.1,832.1 453.7,832.1 449.6,832.0 445.8,831.5 442.4,830.8 439.3,829.9 436.6,828.8 434.4,827.5 432.7,826.0 431.4,824.3 430.6,822.4 430.4,820.4 430.6,818.3 431.4,816.1 432.6,813.9 434.4,811.6 436.6,809.3 439.3,807.0 442.3,804.7 445.8,802.5 449.6,800.3 453.6,798.3 458.0,796.4 462.6,794.6 467.3,793.0 472.1,791.6 477.0,790.4 481.8,789.5 486.7,788.7 491.4,788.2 495.9,787.9 500.3,787.9 504.4,788.0 508.2,788.5 511.6,789.2 514.7,790.1 517.4,791.2 519.6,792.5 521.3,794.0 522.6,795.7 523.4,797.6" fill="url(#gTop)" stroke="#ffffff" stroke-width="1.6"/><polygon points="452,887 462,883 482,895 472,899" fill="#e8b030"/><polygon points="452,887 472,899 488,925 468,914" fill="#cf9620"/><polygon points="472,899 482,895 494,918 488,925" fill="#a87410"/><circle cx="443" cy="821" r="2.3" fill="#c89020"/><circle cx="455" cy="823" r="2.3" fill="#c89020"/><circle cx="471" cy="822" r="2.3" fill="#c89020"/><polygon points="761.3,892.6 761.0,894.6 760.2,896.5 758.7,898.4 756.6,900.3 753.9,902.0 750.7,903.6 747.1,905.1 743.1,906.4 738.6,907.5 734.0,908.4 729.1,909.1 724.1,909.5 719.0,909.6 714.0,909.6 709.1,909.3 704.3,908.7 699.9,907.9 695.7,906.9 692.0,905.7 688.7,904.3 686.0,902.7 683.7,901.0 682.1,899.2 681.1,897.4 680.7,895.4 681.0,893.4 681.8,891.5 683.3,889.6 685.4,887.7 688.1,886.0 691.3,884.4 694.9,882.9 698.9,881.6 703.4,880.5 708.0,879.6 712.9,878.9 717.9,878.5 723.0,878.4 728.0,878.4 732.9,878.7 737.7,879.3 742.1,880.1 746.3,881.1 750.0,882.3 753.3,883.7 756.0,885.3 758.3,887.0 759.9,888.8 760.9,890.6 761.3,892.6" fill="#4a4a4a" stroke="#e8e8e8" stroke-width="1.2"/><polygon points="757.3,890.7 757.0,892.2 756.2,893.7 754.9,895.1 753.0,896.5 750.6,897.8 747.7,899.1 744.4,900.2 740.8,901.2 736.8,902.0 732.6,902.7 728.2,903.2 723.7,903.6 719.1,903.7 714.6,903.7 710.2,903.5 705.9,903.1 701.9,902.6 698.2,901.8 694.8,900.9 691.9,899.9 689.4,898.7 687.4,897.5 686.0,896.1 685.1,894.7 684.7,893.3 685.0,891.8 685.8,890.3 687.1,888.9 689.0,887.5 691.4,886.2 694.3,884.9 697.6,883.8 701.2,882.8 705.2,882.0 709.4,881.3 713.8,880.8 718.3,880.4 722.9,880.3 727.4,880.3 731.8,880.5 736.1,880.9 740.1,881.4 743.8,882.2 747.2,883.1 750.1,884.1 752.6,885.3 754.6,886.5 756.0,887.9 756.9,889.3 757.3,890.7" fill="#2e2e2e"/><polygon points="682.0,787.4 760.0,784.6 755.0,884.7 754.9,885.7 754.6,886.6 754.1,887.6 753.3,888.5 752.4,889.4 751.2,890.3 749.9,891.2 748.4,892.0 746.6,892.8 744.7,893.6 742.7,894.3 740.5,895.0 738.2,895.6 735.7,896.1 733.2,896.6 730.5,897.0 727.8,897.4 725.0,897.6 722.2,897.9 719.4,898.0 716.6,898.1 713.8,898.0 711.0,898.0 708.3,897.8 705.6,897.6 703.0,897.3 700.6,896.9 698.2,896.4 696.0,895.9 693.9,895.4 691.9,894.7 690.1,894.1 688.5,893.3 687.1,892.6 685.9,891.8 684.9,890.9 684.1,890.0 683.5,889.1 683.2,888.2 683.0,887.3" fill="url(#gPurple)" stroke="#d8c8f8" stroke-width="1.2"/><polygon points="760.0,784.6 759.8,786.1 759.2,787.6 758.2,789.0 756.8,790.4 755.0,791.8 752.8,793.1 750.3,794.4 747.4,795.5 744.3,796.5 740.9,797.4 737.3,798.2 733.5,798.9 729.6,799.4 725.6,799.8 721.5,800.0 717.4,800.1 713.4,800.0 709.4,799.7 705.6,799.3 701.9,798.8 698.5,798.1 695.3,797.3 692.4,796.4 689.8,795.3 687.5,794.2 685.6,792.9 684.1,791.6 683.0,790.2 682.3,788.8 682.0,787.4 682.2,785.9 682.8,784.4 683.8,783.0 685.2,781.6 687.0,780.2 689.2,778.9 691.7,777.6 694.6,776.5 697.7,775.5 701.1,774.6 704.7,773.8 708.5,773.1 712.4,772.6 716.4,772.2 720.5,772.0 724.6,771.9 728.6,772.0 732.6,772.3 736.4,772.7 740.1,773.2 743.5,773.9 746.7,774.7 749.6,775.6 752.2,776.7 754.5,777.8 756.4,779.1 757.9,780.4 759.0,781.8 759.7,783.2 760.0,784.6" fill="#5a0eb8" stroke="#d8c8f8" stroke-width="1.6"/><polygon points="687,864 709,870 711,896 686,888" fill="#a8607a" opacity="0.92"/><text x="706" y="803" font-size="7" fill="#e0a040" text-anchor="middle" font-family="Liberation Sans">x</text><text x="719" y="805" font-size="7" fill="#e0a040" text-anchor="middle" font-family="Liberation Sans">x</text><text x="733" y="804" font-size="7" fill="#e0a040" text-anchor="middle" font-family="Liberation Sans">x</text><polygon points="676.7,978.1 678.0,982.8 678.3,987.8 677.8,993.0 676.4,998.2 674.1,1003.4 671.0,1008.6 667.2,1013.5 662.6,1018.3 657.4,1022.7 651.6,1026.7 645.4,1030.3 638.7,1033.3 631.9,1035.8 624.8,1037.7 617.8,1039.0 610.8,1039.6 603.9,1039.6 597.4,1038.9 591.2,1037.6 585.6,1035.7 580.5,1033.1 576.0,1030.0 572.3,1026.4 569.4,1022.4 567.3,1017.9 566.0,1013.2 565.7,1008.2 566.2,1003.0 567.6,997.8 569.9,992.6 573.0,987.4 576.8,982.5 581.4,977.7 586.6,973.3 592.4,969.3 598.6,965.7 605.3,962.7 612.1,960.2 619.2,958.3 626.2,957.0 633.2,956.4 640.1,956.4 646.6,957.1 652.8,958.4 658.4,960.3 663.5,962.9 668.0,966.0 671.7,969.6 674.6,973.6 676.7,978.1" fill="#4a4a4a" stroke="#e8e8e8" stroke-width="1.2"/><polygon points="671.3,978.1 672.1,981.7 672.2,985.5 671.5,989.4 670.0,993.5 667.7,997.7 664.8,1001.7 661.1,1005.8 656.8,1009.6 652.0,1013.2 646.7,1016.6 641.1,1019.6 635.1,1022.3 628.9,1024.6 622.6,1026.4 616.3,1027.7 610.1,1028.5 604.1,1028.8 598.3,1028.6 592.9,1027.9 588.0,1026.7 583.7,1025.0 579.9,1022.8 576.8,1020.2 574.4,1017.2 572.7,1013.9 571.9,1010.3 571.8,1006.5 572.5,1002.6 574.0,998.5 576.3,994.3 579.2,990.3 582.9,986.2 587.2,982.4 592.0,978.8 597.3,975.4 602.9,972.4 608.9,969.7 615.1,967.4 621.4,965.6 627.7,964.3 633.9,963.5 639.9,963.2 645.7,963.4 651.1,964.1 656.0,965.3 660.3,967.0 664.1,969.2 667.2,971.8 669.6,974.8 671.3,978.1" fill="#2e2e2e"/><polygon points="543.4,899.5 650.6,860.5 668.9,972.2 669.5,974.5 669.9,976.8 669.9,979.3 669.6,981.8 669.1,984.4 668.2,987.0 667.0,989.6 665.6,992.2 663.8,994.8 661.8,997.4 659.5,999.9 657.0,1002.4 654.3,1004.7 651.3,1007.0 648.2,1009.2 644.9,1011.3 641.4,1013.3 637.8,1015.1 634.1,1016.7 630.3,1018.2 626.4,1019.5 622.5,1020.6 618.6,1021.6 614.7,1022.3 610.8,1022.9 607.0,1023.2 603.2,1023.3 599.6,1023.3 596.1,1023.0 592.7,1022.5 589.5,1021.8 586.5,1021.0 583.7,1019.9 581.1,1018.6 578.8,1017.2 576.7,1015.6 574.9,1013.9 573.3,1012.0 572.1,1009.9 571.1,1007.8" fill="url(#gBody)" stroke="#ffffff" stroke-width="1.2"/><polygon points="650.6,860.5 651.6,864.1 652.0,868.0 651.7,871.9 650.9,875.9 649.5,880.0 647.6,884.1 645.0,888.1 642.0,892.1 638.4,895.9 634.4,899.5 630.0,903.0 625.3,906.1 620.2,909.0 614.8,911.6 609.3,913.8 603.6,915.7 597.9,917.1 592.2,918.2 586.5,918.8 580.9,919.0 575.5,918.8 570.3,918.2 565.4,917.1 560.9,915.7 556.8,913.8 553.1,911.6 549.9,909.0 547.2,906.1 545.0,902.9 543.4,899.5 542.4,895.9 542.0,892.0 542.3,888.1 543.1,884.1 544.5,880.0 546.4,875.9 549.0,871.9 552.0,867.9 555.6,864.1 559.6,860.5 564.0,857.0 568.7,853.9 573.8,851.0 579.2,848.4 584.7,846.2 590.4,844.3 596.1,842.9 601.8,841.8 607.5,841.2 613.1,841.0 618.5,841.2 623.7,841.8 628.6,842.9 633.1,844.3 637.2,846.2 640.9,848.4 644.1,851.0 646.8,853.9 649.0,857.1 650.6,860.5" fill="url(#gTop)" stroke="#ffffff" stroke-width="1.6"/><polygon points="551,968 562,962 588,976 577,982" fill="#e8b030"/><polygon points="551,968 577,982 595,1016 570,1004" fill="#cf9620"/><polygon points="577,982 588,976 602,1008 595,1016" fill="#a87410"/><circle cx="562" cy="899" r="2.8" fill="#c89020"/><circle cx="579" cy="903.5" r="2.8" fill="#c89020"/><circle cx="599" cy="902" r="2.8" fill="#c89020"/><path d="M660 840 L662 855 M668 846 L680 850 M757 890 L764 905 L763 912" stroke="#f0f0f0" stroke-width="1.4" fill="none"/><path d="M666 990 L673 1002 L673 1022" stroke="#f0f0f0" stroke-width="1.4" fill="none"/><path d="M811,1056.5 C818,1005 832,958 850,930 C870,902 900,893 935,893 C990,894 1045,922 1090.5,958 L1090.5,1051 A5.5 5.5 0 0 1 1085 1056.5 Z" fill="url(#gBig)" stroke="#ffffff" stroke-width="2"/><path d="M850,1055.5 C840,1010 838,965 852,932 C872,903 900,896 932,896 C990,897 1045,925 1089.5,960 L1089.5,1050.5 A5 5 0 0 1 1084.5 1055.5 Z" fill="#c6c6c6"/><path d="M850,930 C870,902 900,893 935,893 C990,894 1045,922 1095,958" stroke="#ffffff" stroke-width="1.4" fill="none"/></g></svg>
</body></html>
